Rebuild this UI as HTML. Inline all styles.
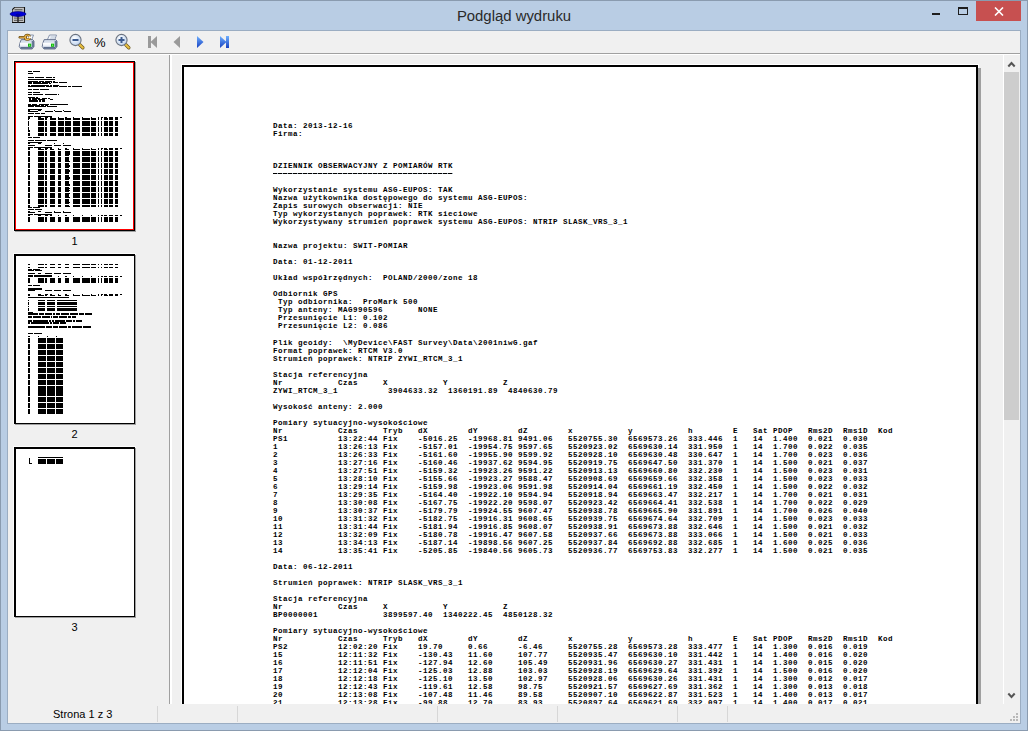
<!DOCTYPE html>
<html><head><meta charset="utf-8"><title>Podgląd wydruku</title>
<style>
*{margin:0;padding:0;box-sizing:border-box}
html,body{width:1028px;height:731px;overflow:hidden}
body{position:relative;background:#B9CDE4;font-family:"Liberation Sans",sans-serif}
.a{position:absolute}
pre.doc{position:absolute;font-family:"Liberation Mono",monospace;font-weight:bold;font-size:7.5px;line-height:8px;color:#000;white-space:pre;letter-spacing:0.5px}
.sep{position:absolute;top:706px;width:1px;height:16px;background:#D7D7D7}
</style></head><body>

<div class="a" style="left:0;top:0;width:1028px;height:731px;border:1px solid #8A9BAF"></div>
<div class="a" style="left:0;top:5.5px;width:1028px;text-align:center;font-size:14.9px;color:#2A2A2A;line-height:20px">Podgląd wydruku</div>
<svg class="a" style="left:0;top:0" width="30" height="30" viewBox="0 0 30 30">
<path d="M12.5 9.5 L14.5 7.5 L24.5 7.5 L24.5 22.5 L12.5 22.5 Z" fill="#C4C4C4" stroke="#505050" stroke-width="1" stroke-linejoin="miter"/>
<path d="M24.5 7 L24.5 23 M12 22.5 L25 22.5" stroke="#101010" stroke-width="1.1"/>
<path d="M12.3 9.7 L14.7 7.3" stroke="#101010" stroke-width="1.1"/>
<rect x="14.5" y="9" width="8" height="1.4" fill="#6A6A6A"/>
<rect x="14" y="17.5" width="9" height="1.2" fill="#6A6A6A"/>
<rect x="14" y="19.8" width="9" height="1.2" fill="#6A6A6A"/>
<rect x="17.2" y="14" width="1.6" height="8.5" fill="#303030"/>
<ellipse cx="18" cy="14" rx="8" ry="2.5" fill="#0000D8" stroke="#000070" stroke-width="0.6"/>
<ellipse cx="18" cy="15" rx="2.5" ry="1.6" fill="#0000A0"/>
</svg>
<div class="a" style="left:932px;top:13px;width:8px;height:2px;background:#1E1E1E"></div>
<div class="a" style="left:958px;top:7px;width:10px;height:8px;border:1px solid #1E1E1E;border-top-width:2px"></div>
<div class="a" style="left:976px;top:1px;width:45px;height:20px;background:#C75050"></div>
<svg class="a" style="left:994px;top:7px" width="10" height="9" viewBox="0 0 10 9"><path d="M1 0.5 L9 8.5 M9 0.5 L1 8.5" stroke="#fff" stroke-width="1.6"/></svg>
<div class="a" style="left:7px;top:30px;width:1014px;height:694px;background:#F0F0F0;border:1px solid #9BADC2"></div>
<div class="a" style="left:8px;top:53px;width:1012px;height:1px;background:#A0A0A0"></div>
<div class="a" style="left:8px;top:54px;width:1012px;height:1px;background:#FFFFFF"></div>
<svg class="a" style="left:0;top:30px" width="240" height="24" viewBox="0 30 240 24">
<defs>
<linearGradient id="pb" x1="0" y1="0" x2="0" y2="1"><stop offset="0" stop-color="#FFFFFF"/><stop offset="0.6" stop-color="#F2F5FA"/><stop offset="1" stop-color="#C4CEE0"/></linearGradient>
<linearGradient id="ps" x1="0" y1="0" x2="1" y2="0"><stop offset="0" stop-color="#8FA2BF"/><stop offset="1" stop-color="#3E4F6E"/></linearGradient>
<linearGradient id="bl" x1="0" y1="0" x2="0" y2="1"><stop offset="0" stop-color="#6FB0FF"/><stop offset="1" stop-color="#1740C0"/></linearGradient>
<radialGradient id="lens" cx="0.4" cy="0.35" r="0.7"><stop offset="0" stop-color="#FFFFFF"/><stop offset="1" stop-color="#B9D0EE"/></radialGradient>
</defs>
<!-- printer setup -->
<g transform="translate(0,0)">
<path d="M26.5 35 L33.5 35 L31.5 40.5 L24 40.5 Z" fill="#F6F8FC" stroke="#6E7E9A" stroke-width="0.8"/>

<path d="M20.2 42.2 L21.2 39.6 L32.6 39.6 L34 41 L34 46.5 L32.2 49 L21 49 L19.2 46.5 Z" fill="#D5DDEA" stroke="#4C5B7A" stroke-width="0.8"/>
<path d="M19.9 42.8 L31.5 42.8 L31.5 47 L20.2 47 Z" fill="url(#pb)"/>
<path d="M31.5 40.5 L33.6 41.2 L33.6 46.5 L31.8 48.6 Z" fill="url(#ps)"/>
<rect x="20.6" y="47" width="11.4" height="1.8" fill="#5E6E8C"/>
<rect x="28" y="43.6" width="3.2" height="3.2" fill="#10B810"/>
<rect x="29" y="44.6" width="1.2" height="1.2" fill="#8AF060"/>
</g>
<path d="M19.8 37.3 L25.5 37.3" stroke="#6A4A10" stroke-width="2.4" stroke-linecap="round"/>
<circle cx="27.4" cy="37.3" r="2.3" fill="none" stroke="#6A4A10" stroke-width="2.4"/>
<path d="M19.9 37.3 L25.5 37.3" stroke="#F0B848" stroke-width="1.1" stroke-linecap="round"/>
<circle cx="27.4" cy="37.3" r="2.3" fill="none" stroke="#F0B848" stroke-width="1.2"/>
<rect x="28.6" y="36.5" width="2.6" height="1.6" fill="#F6F8FC"/>
<!-- printer -->
<g transform="translate(23,0)">
<path d="M26.5 35 L33.5 35 L31.5 40.5 L24 40.5 Z" fill="#F6F8FC" stroke="#6E7E9A" stroke-width="0.8"/>
<path d="M27.5 37 L32 37 M26.8 39 L31.3 39" stroke="#A0AEC6" stroke-width="0.8"/>
<path d="M20.2 42.2 L21.2 39.6 L32.6 39.6 L34 41 L34 46.5 L32.2 49 L21 49 L19.2 46.5 Z" fill="#D5DDEA" stroke="#4C5B7A" stroke-width="0.8"/>
<path d="M19.9 42.8 L31.5 42.8 L31.5 47 L20.2 47 Z" fill="url(#pb)"/>
<path d="M31.5 40.5 L33.6 41.2 L33.6 46.5 L31.8 48.6 Z" fill="url(#ps)"/>
<rect x="20.6" y="47" width="11.4" height="1.8" fill="#5E6E8C"/>
<rect x="28" y="43.6" width="3.2" height="3.2" fill="#10B810"/>
<rect x="29" y="44.6" width="1.2" height="1.2" fill="#8AF060"/>
</g>
<!-- zoom out -->
<path d="M79.8 44.8 L82.8 47.8" stroke="#6A5518" stroke-width="3.4" stroke-linecap="round"/>
<path d="M79.8 44.8 L82.8 47.8" stroke="#E8C040" stroke-width="2" stroke-linecap="round"/>
<circle cx="75.5" cy="40" r="5.6" fill="url(#lens)" stroke="#6C7480" stroke-width="1.1"/>
<rect x="72.5" y="39" width="6" height="2" fill="#3A5A8E"/>
<!-- zoom in -->
<path d="M125.8 44.8 L128.8 47.8" stroke="#6A5518" stroke-width="3.4" stroke-linecap="round"/>
<path d="M125.8 44.8 L128.8 47.8" stroke="#E8C040" stroke-width="2" stroke-linecap="round"/>
<circle cx="121.5" cy="40" r="5.6" fill="url(#lens)" stroke="#6C7480" stroke-width="1.1"/>
<rect x="118.5" y="39" width="6" height="2" fill="#3A5A8E"/>
<rect x="120.5" y="37" width="2" height="6" fill="#3A5A8E"/>
<!-- nav -->
<rect x="148" y="36" width="3" height="12" fill="#9A9A9A"/>
<path d="M150.5 42 L157 36 L157 48 Z" fill="#9A9A9A"/>
<path d="M173.5 42 L180 36 L180 48 Z" fill="#9A9A9A"/>
<path d="M203.5 42 L197 36 L197 48 Z" fill="url(#bl)"/>
<path d="M226.5 42 L220 36 L220 48 Z" fill="url(#bl)"/>
<rect x="226" y="36" width="3" height="12" fill="url(#bl)"/>
</svg>
<div class="a" style="left:94px;top:35px;font-size:13px;line-height:15px;color:#000">%</div>

<div class="a" style="left:169px;top:55px;width:1px;height:649px;background:#A0A0A0"></div>
<div class="a" style="left:170px;top:55px;width:2px;height:649px;background:#FFFFFF"></div>
<svg class="a" style="left:0;top:0" width="170" height="640" viewBox="0 0 170 640"><rect x="13" y="60" width="123" height="171" fill="#FFFFFF" opacity="0.8"/><rect x="15" y="62" width="121" height="170" fill="#A0A0A0"/><rect x="14" y="61" width="121" height="170" fill="#000"/><rect x="15" y="62" width="119" height="168" fill="#FF0000"/><rect x="16" y="63" width="117" height="166" fill="#FFFFFF"/><rect x="13" y="253" width="123" height="171" fill="#FFFFFF" opacity="0.8"/><rect x="15" y="255" width="121" height="170" fill="#A0A0A0"/><rect x="14" y="254" width="121" height="170" fill="#000"/><rect x="16" y="256" width="118" height="167" fill="#FFFFFF"/><rect x="13" y="446" width="123" height="171" fill="#FFFFFF" opacity="0.8"/><rect x="15" y="448" width="121" height="170" fill="#A0A0A0"/><rect x="14" y="447" width="121" height="170" fill="#000"/><rect x="16" y="449" width="118" height="167" fill="#FFFFFF"/><g fill="#000" shape-rendering="crispEdges"><rect x="28.00" y="71.00" width="3.80" height="1.00"/><rect x="32.56" y="71.00" width="7.60" height="1.00"/><rect x="28.00" y="73.00" width="4.56" height="1.00"/><rect x="28.00" y="77.00" width="6.08" height="1.00"/><rect x="34.84" y="77.00" width="9.12" height="1.00"/><rect x="44.72" y="77.00" width="0.76" height="1.00"/><rect x="46.24" y="77.00" width="6.08" height="1.00"/><rect x="53.08" y="77.00" width="2.28" height="1.00"/><rect x="28.00" y="79.00" width="27.36" height="1.00"/><rect x="28.00" y="81.00" width="9.88" height="1.00"/><rect x="38.64" y="81.00" width="5.32" height="1.00"/><rect x="44.72" y="81.00" width="7.60" height="1.00"/><rect x="53.08" y="81.00" width="2.28" height="1.00"/><rect x="28.00" y="82.00" width="3.80" height="1.00"/><rect x="32.56" y="82.00" width="8.36" height="1.00"/><rect x="41.68" y="82.00" width="8.36" height="1.00"/><rect x="50.80" y="82.00" width="1.52" height="1.00"/><rect x="53.08" y="82.00" width="5.32" height="1.00"/><rect x="59.16" y="82.00" width="7.60" height="1.00"/><rect x="28.00" y="83.00" width="3.80" height="1.00"/><rect x="32.56" y="83.00" width="6.08" height="1.00"/><rect x="39.40" y="83.00" width="8.36" height="1.00"/><rect x="48.52" y="83.00" width="2.28" height="1.00"/><rect x="28.00" y="85.00" width="2.28" height="1.00"/><rect x="31.04" y="85.00" width="10.64" height="1.00"/><rect x="42.44" y="85.00" width="6.84" height="1.00"/><rect x="50.04" y="85.00" width="2.28" height="1.00"/><rect x="53.08" y="85.00" width="6.08" height="1.00"/><rect x="28.00" y="86.00" width="10.64" height="1.00"/><rect x="39.40" y="86.00" width="6.08" height="1.00"/><rect x="46.24" y="86.00" width="6.08" height="1.00"/><rect x="53.08" y="86.00" width="5.32" height="1.00"/><rect x="59.16" y="86.00" width="7.60" height="1.00"/><rect x="67.52" y="86.00" width="3.80" height="1.00"/><rect x="72.08" y="86.00" width="9.88" height="1.00"/><rect x="28.00" y="89.00" width="3.80" height="1.00"/><rect x="32.56" y="89.00" width="6.84" height="1.00"/><rect x="40.16" y="89.00" width="8.36" height="1.00"/><rect x="28.00" y="92.00" width="3.80" height="1.00"/><rect x="32.56" y="92.00" width="7.60" height="1.00"/><rect x="28.00" y="94.00" width="3.80" height="1.00"/><rect x="32.56" y="94.00" width="10.64" height="1.00"/><rect x="44.72" y="94.00" width="12.16" height="1.00"/><rect x="57.64" y="94.00" width="1.52" height="1.00"/><rect x="28.00" y="97.00" width="6.84" height="1.00"/><rect x="35.60" y="97.00" width="2.28" height="1.00"/><rect x="28.76" y="98.00" width="2.28" height="1.00"/><rect x="31.80" y="98.00" width="8.36" height="1.00"/><rect x="41.68" y="98.00" width="5.32" height="1.00"/><rect x="47.76" y="98.00" width="2.28" height="1.00"/><rect x="28.76" y="99.00" width="2.28" height="1.00"/><rect x="31.80" y="99.00" width="5.32" height="1.00"/><rect x="37.88" y="99.00" width="6.84" height="1.00"/><rect x="50.04" y="99.00" width="3.04" height="1.00"/><rect x="28.76" y="100.00" width="9.12" height="1.00"/><rect x="38.64" y="100.00" width="2.28" height="1.00"/><rect x="41.68" y="100.00" width="3.80" height="1.00"/><rect x="28.76" y="101.00" width="9.12" height="1.00"/><rect x="38.64" y="101.00" width="2.28" height="1.00"/><rect x="41.68" y="101.00" width="3.80" height="1.00"/><rect x="28.00" y="104.00" width="3.04" height="1.00"/><rect x="31.80" y="104.00" width="5.32" height="1.00"/><rect x="38.64" y="104.00" width="10.64" height="1.00"/><rect x="50.04" y="104.00" width="18.24" height="1.00"/><rect x="28.00" y="105.00" width="4.56" height="1.00"/><rect x="33.32" y="105.00" width="6.84" height="1.00"/><rect x="40.92" y="105.00" width="3.04" height="1.00"/><rect x="44.72" y="105.00" width="3.04" height="1.00"/><rect x="28.00" y="106.00" width="6.08" height="1.00"/><rect x="34.84" y="106.00" width="6.84" height="1.00"/><rect x="42.44" y="106.00" width="3.80" height="1.00"/><rect x="47.00" y="106.00" width="9.88" height="1.00"/><rect x="28.00" y="109.00" width="4.56" height="1.00"/><rect x="33.32" y="109.00" width="9.12" height="1.00"/><rect x="28.00" y="110.00" width="1.52" height="1.00"/><rect x="37.88" y="110.00" width="3.04" height="1.00"/><rect x="44.72" y="110.00" width="0.76" height="1.00"/><rect x="53.84" y="110.00" width="0.76" height="1.00"/><rect x="62.96" y="110.00" width="0.76" height="1.00"/><rect x="28.00" y="111.00" width="9.88" height="1.00"/><rect x="45.48" y="111.00" width="7.60" height="1.00"/><rect x="54.60" y="111.00" width="7.60" height="1.00"/><rect x="63.72" y="111.00" width="7.60" height="1.00"/><rect x="28.00" y="113.00" width="6.08" height="1.00"/><rect x="34.84" y="113.00" width="5.32" height="1.00"/><rect x="40.92" y="113.00" width="3.80" height="1.00"/><rect x="28.00" y="116.00" width="5.32" height="1.00"/><rect x="34.08" y="116.00" width="17.48" height="1.00"/><rect x="28.00" y="117.00" width="1.52" height="1.00"/><rect x="37.88" y="117.00" width="3.04" height="1.00"/><rect x="44.72" y="117.00" width="3.04" height="1.00"/><rect x="50.04" y="117.00" width="1.52" height="1.00"/><rect x="57.64" y="117.00" width="1.52" height="1.00"/><rect x="65.24" y="117.00" width="1.52" height="1.00"/><rect x="72.84" y="117.00" width="0.76" height="1.00"/><rect x="81.96" y="117.00" width="0.76" height="1.00"/><rect x="91.08" y="117.00" width="0.76" height="1.00"/><rect x="97.92" y="117.00" width="0.76" height="1.00"/><rect x="100.96" y="117.00" width="2.28" height="1.00"/><rect x="104.00" y="117.00" width="3.04" height="1.00"/><rect x="109.32" y="117.00" width="3.80" height="1.00"/><rect x="114.64" y="117.00" width="3.80" height="1.00"/><rect x="119.96" y="117.00" width="2.28" height="1.00"/><rect x="28.00" y="118.00" width="2.28" height="1.00"/><rect x="37.88" y="118.00" width="6.08" height="1.00"/><rect x="44.72" y="118.00" width="2.28" height="1.00"/><rect x="50.04" y="118.00" width="6.08" height="1.00"/><rect x="57.64" y="118.00" width="6.84" height="1.00"/><rect x="65.24" y="118.00" width="5.32" height="1.00"/><rect x="72.84" y="118.00" width="7.60" height="1.00"/><rect x="81.96" y="118.00" width="7.60" height="1.00"/><rect x="91.08" y="118.00" width="5.32" height="1.00"/><rect x="97.92" y="118.00" width="0.76" height="1.00"/><rect x="100.96" y="118.00" width="1.52" height="1.00"/><rect x="104.00" y="118.00" width="3.80" height="1.00"/><rect x="109.32" y="118.00" width="3.80" height="1.00"/><rect x="114.64" y="118.00" width="3.80" height="1.00"/><rect x="28.00" y="119.00" width="0.76" height="1.00"/><rect x="37.88" y="119.00" width="6.08" height="1.00"/><rect x="44.72" y="119.00" width="2.28" height="1.00"/><rect x="50.04" y="119.00" width="6.08" height="1.00"/><rect x="57.64" y="119.00" width="6.84" height="1.00"/><rect x="65.24" y="119.00" width="5.32" height="1.00"/><rect x="72.84" y="119.00" width="7.60" height="1.00"/><rect x="81.96" y="119.00" width="7.60" height="1.00"/><rect x="91.08" y="119.00" width="5.32" height="1.00"/><rect x="97.92" y="119.00" width="0.76" height="1.00"/><rect x="100.96" y="119.00" width="1.52" height="1.00"/><rect x="104.00" y="119.00" width="3.80" height="1.00"/><rect x="109.32" y="119.00" width="3.80" height="1.00"/><rect x="114.64" y="119.00" width="3.80" height="1.00"/><rect x="28.00" y="121.00" width="0.76" height="1.00"/><rect x="37.88" y="121.00" width="6.08" height="1.00"/><rect x="44.72" y="121.00" width="2.28" height="1.00"/><rect x="50.04" y="121.00" width="6.08" height="1.00"/><rect x="57.64" y="121.00" width="6.84" height="1.00"/><rect x="65.24" y="121.00" width="5.32" height="1.00"/><rect x="72.84" y="121.00" width="7.60" height="1.00"/><rect x="81.96" y="121.00" width="7.60" height="1.00"/><rect x="91.08" y="121.00" width="5.32" height="1.00"/><rect x="97.92" y="121.00" width="0.76" height="1.00"/><rect x="100.96" y="121.00" width="1.52" height="1.00"/><rect x="104.00" y="121.00" width="3.80" height="1.00"/><rect x="109.32" y="121.00" width="3.80" height="1.00"/><rect x="114.64" y="121.00" width="3.80" height="1.00"/><rect x="28.00" y="122.00" width="0.76" height="1.00"/><rect x="37.88" y="122.00" width="6.08" height="1.00"/><rect x="44.72" y="122.00" width="2.28" height="1.00"/><rect x="50.04" y="122.00" width="6.08" height="1.00"/><rect x="57.64" y="122.00" width="6.84" height="1.00"/><rect x="65.24" y="122.00" width="5.32" height="1.00"/><rect x="72.84" y="122.00" width="7.60" height="1.00"/><rect x="81.96" y="122.00" width="7.60" height="1.00"/><rect x="91.08" y="122.00" width="5.32" height="1.00"/><rect x="97.92" y="122.00" width="0.76" height="1.00"/><rect x="100.96" y="122.00" width="1.52" height="1.00"/><rect x="104.00" y="122.00" width="3.80" height="1.00"/><rect x="109.32" y="122.00" width="3.80" height="1.00"/><rect x="114.64" y="122.00" width="3.80" height="1.00"/><rect x="28.00" y="123.00" width="0.76" height="1.00"/><rect x="37.88" y="123.00" width="6.08" height="1.00"/><rect x="44.72" y="123.00" width="2.28" height="1.00"/><rect x="50.04" y="123.00" width="6.08" height="1.00"/><rect x="57.64" y="123.00" width="6.84" height="1.00"/><rect x="65.24" y="123.00" width="5.32" height="1.00"/><rect x="72.84" y="123.00" width="7.60" height="1.00"/><rect x="81.96" y="123.00" width="7.60" height="1.00"/><rect x="91.08" y="123.00" width="5.32" height="1.00"/><rect x="97.92" y="123.00" width="0.76" height="1.00"/><rect x="100.96" y="123.00" width="1.52" height="1.00"/><rect x="104.00" y="123.00" width="3.80" height="1.00"/><rect x="109.32" y="123.00" width="3.80" height="1.00"/><rect x="114.64" y="123.00" width="3.80" height="1.00"/><rect x="28.00" y="124.00" width="0.76" height="1.00"/><rect x="37.88" y="124.00" width="6.08" height="1.00"/><rect x="44.72" y="124.00" width="2.28" height="1.00"/><rect x="50.04" y="124.00" width="6.08" height="1.00"/><rect x="57.64" y="124.00" width="6.84" height="1.00"/><rect x="65.24" y="124.00" width="5.32" height="1.00"/><rect x="72.84" y="124.00" width="7.60" height="1.00"/><rect x="81.96" y="124.00" width="7.60" height="1.00"/><rect x="91.08" y="124.00" width="5.32" height="1.00"/><rect x="97.92" y="124.00" width="0.76" height="1.00"/><rect x="100.96" y="124.00" width="1.52" height="1.00"/><rect x="104.00" y="124.00" width="3.80" height="1.00"/><rect x="109.32" y="124.00" width="3.80" height="1.00"/><rect x="114.64" y="124.00" width="3.80" height="1.00"/><rect x="28.00" y="125.00" width="0.76" height="1.00"/><rect x="37.88" y="125.00" width="6.08" height="1.00"/><rect x="44.72" y="125.00" width="2.28" height="1.00"/><rect x="50.04" y="125.00" width="6.08" height="1.00"/><rect x="57.64" y="125.00" width="6.84" height="1.00"/><rect x="65.24" y="125.00" width="5.32" height="1.00"/><rect x="72.84" y="125.00" width="7.60" height="1.00"/><rect x="81.96" y="125.00" width="7.60" height="1.00"/><rect x="91.08" y="125.00" width="5.32" height="1.00"/><rect x="97.92" y="125.00" width="0.76" height="1.00"/><rect x="100.96" y="125.00" width="1.52" height="1.00"/><rect x="104.00" y="125.00" width="3.80" height="1.00"/><rect x="109.32" y="125.00" width="3.80" height="1.00"/><rect x="114.64" y="125.00" width="3.80" height="1.00"/><rect x="28.00" y="127.00" width="0.76" height="1.00"/><rect x="37.88" y="127.00" width="6.08" height="1.00"/><rect x="44.72" y="127.00" width="2.28" height="1.00"/><rect x="50.04" y="127.00" width="6.08" height="1.00"/><rect x="57.64" y="127.00" width="6.84" height="1.00"/><rect x="65.24" y="127.00" width="5.32" height="1.00"/><rect x="72.84" y="127.00" width="7.60" height="1.00"/><rect x="81.96" y="127.00" width="7.60" height="1.00"/><rect x="91.08" y="127.00" width="5.32" height="1.00"/><rect x="97.92" y="127.00" width="0.76" height="1.00"/><rect x="100.96" y="127.00" width="1.52" height="1.00"/><rect x="104.00" y="127.00" width="3.80" height="1.00"/><rect x="109.32" y="127.00" width="3.80" height="1.00"/><rect x="114.64" y="127.00" width="3.80" height="1.00"/><rect x="28.00" y="128.00" width="0.76" height="1.00"/><rect x="37.88" y="128.00" width="6.08" height="1.00"/><rect x="44.72" y="128.00" width="2.28" height="1.00"/><rect x="50.04" y="128.00" width="6.08" height="1.00"/><rect x="57.64" y="128.00" width="6.84" height="1.00"/><rect x="65.24" y="128.00" width="5.32" height="1.00"/><rect x="72.84" y="128.00" width="7.60" height="1.00"/><rect x="81.96" y="128.00" width="7.60" height="1.00"/><rect x="91.08" y="128.00" width="5.32" height="1.00"/><rect x="97.92" y="128.00" width="0.76" height="1.00"/><rect x="100.96" y="128.00" width="1.52" height="1.00"/><rect x="104.00" y="128.00" width="3.80" height="1.00"/><rect x="109.32" y="128.00" width="3.80" height="1.00"/><rect x="114.64" y="128.00" width="3.80" height="1.00"/><rect x="28.00" y="129.00" width="0.76" height="1.00"/><rect x="37.88" y="129.00" width="6.08" height="1.00"/><rect x="44.72" y="129.00" width="2.28" height="1.00"/><rect x="50.04" y="129.00" width="6.08" height="1.00"/><rect x="57.64" y="129.00" width="6.84" height="1.00"/><rect x="65.24" y="129.00" width="5.32" height="1.00"/><rect x="72.84" y="129.00" width="7.60" height="1.00"/><rect x="81.96" y="129.00" width="7.60" height="1.00"/><rect x="91.08" y="129.00" width="5.32" height="1.00"/><rect x="97.92" y="129.00" width="0.76" height="1.00"/><rect x="100.96" y="129.00" width="1.52" height="1.00"/><rect x="104.00" y="129.00" width="3.80" height="1.00"/><rect x="109.32" y="129.00" width="3.80" height="1.00"/><rect x="114.64" y="129.00" width="3.80" height="1.00"/><rect x="28.00" y="130.00" width="1.52" height="1.00"/><rect x="37.88" y="130.00" width="6.08" height="1.00"/><rect x="44.72" y="130.00" width="2.28" height="1.00"/><rect x="50.04" y="130.00" width="6.08" height="1.00"/><rect x="57.64" y="130.00" width="6.84" height="1.00"/><rect x="65.24" y="130.00" width="5.32" height="1.00"/><rect x="72.84" y="130.00" width="7.60" height="1.00"/><rect x="81.96" y="130.00" width="7.60" height="1.00"/><rect x="91.08" y="130.00" width="5.32" height="1.00"/><rect x="97.92" y="130.00" width="0.76" height="1.00"/><rect x="100.96" y="130.00" width="1.52" height="1.00"/><rect x="104.00" y="130.00" width="3.80" height="1.00"/><rect x="109.32" y="130.00" width="3.80" height="1.00"/><rect x="114.64" y="130.00" width="3.80" height="1.00"/><rect x="28.00" y="131.00" width="1.52" height="1.00"/><rect x="37.88" y="131.00" width="6.08" height="1.00"/><rect x="44.72" y="131.00" width="2.28" height="1.00"/><rect x="50.04" y="131.00" width="6.08" height="1.00"/><rect x="57.64" y="131.00" width="6.84" height="1.00"/><rect x="65.24" y="131.00" width="5.32" height="1.00"/><rect x="72.84" y="131.00" width="7.60" height="1.00"/><rect x="81.96" y="131.00" width="7.60" height="1.00"/><rect x="91.08" y="131.00" width="5.32" height="1.00"/><rect x="97.92" y="131.00" width="0.76" height="1.00"/><rect x="100.96" y="131.00" width="1.52" height="1.00"/><rect x="104.00" y="131.00" width="3.80" height="1.00"/><rect x="109.32" y="131.00" width="3.80" height="1.00"/><rect x="114.64" y="131.00" width="3.80" height="1.00"/><rect x="28.00" y="133.00" width="1.52" height="1.00"/><rect x="37.88" y="133.00" width="6.08" height="1.00"/><rect x="44.72" y="133.00" width="2.28" height="1.00"/><rect x="50.04" y="133.00" width="6.08" height="1.00"/><rect x="57.64" y="133.00" width="6.84" height="1.00"/><rect x="65.24" y="133.00" width="5.32" height="1.00"/><rect x="72.84" y="133.00" width="7.60" height="1.00"/><rect x="81.96" y="133.00" width="7.60" height="1.00"/><rect x="91.08" y="133.00" width="5.32" height="1.00"/><rect x="97.92" y="133.00" width="0.76" height="1.00"/><rect x="100.96" y="133.00" width="1.52" height="1.00"/><rect x="104.00" y="133.00" width="3.80" height="1.00"/><rect x="109.32" y="133.00" width="3.80" height="1.00"/><rect x="114.64" y="133.00" width="3.80" height="1.00"/><rect x="28.00" y="134.00" width="1.52" height="1.00"/><rect x="37.88" y="134.00" width="6.08" height="1.00"/><rect x="44.72" y="134.00" width="2.28" height="1.00"/><rect x="50.04" y="134.00" width="6.08" height="1.00"/><rect x="57.64" y="134.00" width="6.84" height="1.00"/><rect x="65.24" y="134.00" width="5.32" height="1.00"/><rect x="72.84" y="134.00" width="7.60" height="1.00"/><rect x="81.96" y="134.00" width="7.60" height="1.00"/><rect x="91.08" y="134.00" width="5.32" height="1.00"/><rect x="97.92" y="134.00" width="0.76" height="1.00"/><rect x="100.96" y="134.00" width="1.52" height="1.00"/><rect x="104.00" y="134.00" width="3.80" height="1.00"/><rect x="109.32" y="134.00" width="3.80" height="1.00"/><rect x="114.64" y="134.00" width="3.80" height="1.00"/><rect x="28.00" y="135.00" width="1.52" height="1.00"/><rect x="37.88" y="135.00" width="6.08" height="1.00"/><rect x="44.72" y="135.00" width="2.28" height="1.00"/><rect x="50.04" y="135.00" width="6.08" height="1.00"/><rect x="57.64" y="135.00" width="6.84" height="1.00"/><rect x="65.24" y="135.00" width="5.32" height="1.00"/><rect x="72.84" y="135.00" width="7.60" height="1.00"/><rect x="81.96" y="135.00" width="7.60" height="1.00"/><rect x="91.08" y="135.00" width="5.32" height="1.00"/><rect x="97.92" y="135.00" width="0.76" height="1.00"/><rect x="100.96" y="135.00" width="1.52" height="1.00"/><rect x="104.00" y="135.00" width="3.80" height="1.00"/><rect x="109.32" y="135.00" width="3.80" height="1.00"/><rect x="114.64" y="135.00" width="3.80" height="1.00"/><rect x="28.00" y="137.00" width="3.80" height="1.00"/><rect x="32.56" y="137.00" width="7.60" height="1.00"/><rect x="28.00" y="140.00" width="6.08" height="1.00"/><rect x="34.84" y="140.00" width="6.84" height="1.00"/><rect x="42.44" y="140.00" width="3.80" height="1.00"/><rect x="47.00" y="140.00" width="9.88" height="1.00"/><rect x="28.00" y="142.00" width="4.56" height="1.00"/><rect x="33.32" y="142.00" width="9.12" height="1.00"/><rect x="28.00" y="143.00" width="1.52" height="1.00"/><rect x="37.88" y="143.00" width="3.04" height="1.00"/><rect x="44.72" y="143.00" width="0.76" height="1.00"/><rect x="53.84" y="143.00" width="0.76" height="1.00"/><rect x="62.96" y="143.00" width="0.76" height="1.00"/><rect x="28.00" y="145.00" width="6.84" height="1.00"/><rect x="44.72" y="145.00" width="7.60" height="1.00"/><rect x="53.84" y="145.00" width="7.60" height="1.00"/><rect x="62.96" y="145.00" width="7.60" height="1.00"/><rect x="28.00" y="147.00" width="5.32" height="1.00"/><rect x="34.08" y="147.00" width="17.48" height="1.00"/><rect x="28.00" y="148.00" width="1.52" height="1.00"/><rect x="37.88" y="148.00" width="3.04" height="1.00"/><rect x="44.72" y="148.00" width="3.04" height="1.00"/><rect x="50.04" y="148.00" width="1.52" height="1.00"/><rect x="57.64" y="148.00" width="1.52" height="1.00"/><rect x="65.24" y="148.00" width="1.52" height="1.00"/><rect x="72.84" y="148.00" width="0.76" height="1.00"/><rect x="81.96" y="148.00" width="0.76" height="1.00"/><rect x="91.08" y="148.00" width="0.76" height="1.00"/><rect x="97.92" y="148.00" width="0.76" height="1.00"/><rect x="100.96" y="148.00" width="2.28" height="1.00"/><rect x="104.00" y="148.00" width="3.04" height="1.00"/><rect x="109.32" y="148.00" width="3.80" height="1.00"/><rect x="114.64" y="148.00" width="3.80" height="1.00"/><rect x="119.96" y="148.00" width="2.28" height="1.00"/><rect x="28.00" y="149.00" width="2.28" height="1.00"/><rect x="37.88" y="149.00" width="6.08" height="1.00"/><rect x="44.72" y="149.00" width="2.28" height="1.00"/><rect x="50.04" y="149.00" width="3.80" height="1.00"/><rect x="57.64" y="149.00" width="3.04" height="1.00"/><rect x="65.24" y="149.00" width="3.80" height="1.00"/><rect x="72.84" y="149.00" width="7.60" height="1.00"/><rect x="81.96" y="149.00" width="7.60" height="1.00"/><rect x="91.08" y="149.00" width="5.32" height="1.00"/><rect x="97.92" y="149.00" width="0.76" height="1.00"/><rect x="100.96" y="149.00" width="1.52" height="1.00"/><rect x="104.00" y="149.00" width="3.80" height="1.00"/><rect x="109.32" y="149.00" width="3.80" height="1.00"/><rect x="114.64" y="149.00" width="3.80" height="1.00"/><rect x="28.00" y="151.00" width="1.52" height="1.00"/><rect x="37.88" y="151.00" width="6.08" height="1.00"/><rect x="44.72" y="151.00" width="2.28" height="1.00"/><rect x="50.04" y="151.00" width="5.32" height="1.00"/><rect x="57.64" y="151.00" width="3.80" height="1.00"/><rect x="65.24" y="151.00" width="4.56" height="1.00"/><rect x="72.84" y="151.00" width="7.60" height="1.00"/><rect x="81.96" y="151.00" width="7.60" height="1.00"/><rect x="91.08" y="151.00" width="5.32" height="1.00"/><rect x="97.92" y="151.00" width="0.76" height="1.00"/><rect x="100.96" y="151.00" width="1.52" height="1.00"/><rect x="104.00" y="151.00" width="3.80" height="1.00"/><rect x="109.32" y="151.00" width="3.80" height="1.00"/><rect x="114.64" y="151.00" width="3.80" height="1.00"/><rect x="28.00" y="152.00" width="1.52" height="1.00"/><rect x="37.88" y="152.00" width="6.08" height="1.00"/><rect x="44.72" y="152.00" width="2.28" height="1.00"/><rect x="50.04" y="152.00" width="5.32" height="1.00"/><rect x="57.64" y="152.00" width="3.80" height="1.00"/><rect x="65.24" y="152.00" width="4.56" height="1.00"/><rect x="72.84" y="152.00" width="7.60" height="1.00"/><rect x="81.96" y="152.00" width="7.60" height="1.00"/><rect x="91.08" y="152.00" width="5.32" height="1.00"/><rect x="97.92" y="152.00" width="0.76" height="1.00"/><rect x="100.96" y="152.00" width="1.52" height="1.00"/><rect x="104.00" y="152.00" width="3.80" height="1.00"/><rect x="109.32" y="152.00" width="3.80" height="1.00"/><rect x="114.64" y="152.00" width="3.80" height="1.00"/><rect x="28.00" y="153.00" width="1.52" height="1.00"/><rect x="37.88" y="153.00" width="6.08" height="1.00"/><rect x="44.72" y="153.00" width="2.28" height="1.00"/><rect x="50.04" y="153.00" width="5.32" height="1.00"/><rect x="57.64" y="153.00" width="3.80" height="1.00"/><rect x="65.24" y="153.00" width="4.56" height="1.00"/><rect x="72.84" y="153.00" width="7.60" height="1.00"/><rect x="81.96" y="153.00" width="7.60" height="1.00"/><rect x="91.08" y="153.00" width="5.32" height="1.00"/><rect x="97.92" y="153.00" width="0.76" height="1.00"/><rect x="100.96" y="153.00" width="1.52" height="1.00"/><rect x="104.00" y="153.00" width="3.80" height="1.00"/><rect x="109.32" y="153.00" width="3.80" height="1.00"/><rect x="114.64" y="153.00" width="3.80" height="1.00"/><rect x="28.00" y="154.00" width="1.52" height="1.00"/><rect x="37.88" y="154.00" width="6.08" height="1.00"/><rect x="44.72" y="154.00" width="2.28" height="1.00"/><rect x="50.04" y="154.00" width="5.32" height="1.00"/><rect x="57.64" y="154.00" width="3.80" height="1.00"/><rect x="65.24" y="154.00" width="4.56" height="1.00"/><rect x="72.84" y="154.00" width="7.60" height="1.00"/><rect x="81.96" y="154.00" width="7.60" height="1.00"/><rect x="91.08" y="154.00" width="5.32" height="1.00"/><rect x="97.92" y="154.00" width="0.76" height="1.00"/><rect x="100.96" y="154.00" width="1.52" height="1.00"/><rect x="104.00" y="154.00" width="3.80" height="1.00"/><rect x="109.32" y="154.00" width="3.80" height="1.00"/><rect x="114.64" y="154.00" width="3.80" height="1.00"/><rect x="28.00" y="155.00" width="1.52" height="1.00"/><rect x="37.88" y="155.00" width="6.08" height="1.00"/><rect x="44.72" y="155.00" width="2.28" height="1.00"/><rect x="50.04" y="155.00" width="5.32" height="1.00"/><rect x="57.64" y="155.00" width="3.80" height="1.00"/><rect x="65.24" y="155.00" width="3.80" height="1.00"/><rect x="72.84" y="155.00" width="7.60" height="1.00"/><rect x="81.96" y="155.00" width="7.60" height="1.00"/><rect x="91.08" y="155.00" width="5.32" height="1.00"/><rect x="97.92" y="155.00" width="0.76" height="1.00"/><rect x="100.96" y="155.00" width="1.52" height="1.00"/><rect x="104.00" y="155.00" width="3.80" height="1.00"/><rect x="109.32" y="155.00" width="3.80" height="1.00"/><rect x="114.64" y="155.00" width="3.80" height="1.00"/><rect x="28.00" y="157.00" width="1.52" height="1.00"/><rect x="37.88" y="157.00" width="6.08" height="1.00"/><rect x="44.72" y="157.00" width="2.28" height="1.00"/><rect x="50.04" y="157.00" width="5.32" height="1.00"/><rect x="57.64" y="157.00" width="3.80" height="1.00"/><rect x="65.24" y="157.00" width="3.80" height="1.00"/><rect x="72.84" y="157.00" width="7.60" height="1.00"/><rect x="81.96" y="157.00" width="7.60" height="1.00"/><rect x="91.08" y="157.00" width="5.32" height="1.00"/><rect x="97.92" y="157.00" width="0.76" height="1.00"/><rect x="100.96" y="157.00" width="1.52" height="1.00"/><rect x="104.00" y="157.00" width="3.80" height="1.00"/><rect x="109.32" y="157.00" width="3.80" height="1.00"/><rect x="114.64" y="157.00" width="3.80" height="1.00"/><rect x="28.00" y="158.00" width="1.52" height="1.00"/><rect x="37.88" y="158.00" width="6.08" height="1.00"/><rect x="44.72" y="158.00" width="2.28" height="1.00"/><rect x="50.04" y="158.00" width="4.56" height="1.00"/><rect x="57.64" y="158.00" width="3.80" height="1.00"/><rect x="65.24" y="158.00" width="3.80" height="1.00"/><rect x="72.84" y="158.00" width="7.60" height="1.00"/><rect x="81.96" y="158.00" width="7.60" height="1.00"/><rect x="91.08" y="158.00" width="5.32" height="1.00"/><rect x="97.92" y="158.00" width="0.76" height="1.00"/><rect x="100.96" y="158.00" width="1.52" height="1.00"/><rect x="104.00" y="158.00" width="3.80" height="1.00"/><rect x="109.32" y="158.00" width="3.80" height="1.00"/><rect x="114.64" y="158.00" width="3.80" height="1.00"/><rect x="28.00" y="159.00" width="1.52" height="1.00"/><rect x="37.88" y="159.00" width="6.08" height="1.00"/><rect x="44.72" y="159.00" width="2.28" height="1.00"/><rect x="50.04" y="159.00" width="5.32" height="1.00"/><rect x="57.64" y="159.00" width="3.80" height="1.00"/><rect x="65.24" y="159.00" width="3.80" height="1.00"/><rect x="72.84" y="159.00" width="7.60" height="1.00"/><rect x="81.96" y="159.00" width="7.60" height="1.00"/><rect x="91.08" y="159.00" width="5.32" height="1.00"/><rect x="97.92" y="159.00" width="0.76" height="1.00"/><rect x="100.96" y="159.00" width="1.52" height="1.00"/><rect x="104.00" y="159.00" width="3.80" height="1.00"/><rect x="109.32" y="159.00" width="3.80" height="1.00"/><rect x="114.64" y="159.00" width="3.80" height="1.00"/><rect x="28.00" y="160.00" width="1.52" height="1.00"/><rect x="37.88" y="160.00" width="6.08" height="1.00"/><rect x="44.72" y="160.00" width="2.28" height="1.00"/><rect x="50.04" y="160.00" width="5.32" height="1.00"/><rect x="57.64" y="160.00" width="3.80" height="1.00"/><rect x="65.24" y="160.00" width="3.80" height="1.00"/><rect x="72.84" y="160.00" width="7.60" height="1.00"/><rect x="81.96" y="160.00" width="7.60" height="1.00"/><rect x="91.08" y="160.00" width="5.32" height="1.00"/><rect x="97.92" y="160.00" width="0.76" height="1.00"/><rect x="100.96" y="160.00" width="1.52" height="1.00"/><rect x="104.00" y="160.00" width="3.80" height="1.00"/><rect x="109.32" y="160.00" width="3.80" height="1.00"/><rect x="114.64" y="160.00" width="3.80" height="1.00"/><rect x="28.00" y="161.00" width="1.52" height="1.00"/><rect x="37.88" y="161.00" width="6.08" height="1.00"/><rect x="44.72" y="161.00" width="2.28" height="1.00"/><rect x="50.04" y="161.00" width="5.32" height="1.00"/><rect x="57.64" y="161.00" width="3.80" height="1.00"/><rect x="65.24" y="161.00" width="4.56" height="1.00"/><rect x="72.84" y="161.00" width="7.60" height="1.00"/><rect x="81.96" y="161.00" width="7.60" height="1.00"/><rect x="91.08" y="161.00" width="5.32" height="1.00"/><rect x="97.92" y="161.00" width="0.76" height="1.00"/><rect x="100.96" y="161.00" width="1.52" height="1.00"/><rect x="104.00" y="161.00" width="3.80" height="1.00"/><rect x="109.32" y="161.00" width="3.80" height="1.00"/><rect x="114.64" y="161.00" width="3.80" height="1.00"/><rect x="28.00" y="163.00" width="1.52" height="1.00"/><rect x="37.88" y="163.00" width="6.08" height="1.00"/><rect x="44.72" y="163.00" width="2.28" height="1.00"/><rect x="50.04" y="163.00" width="5.32" height="1.00"/><rect x="57.64" y="163.00" width="3.80" height="1.00"/><rect x="65.24" y="163.00" width="3.80" height="1.00"/><rect x="72.84" y="163.00" width="7.60" height="1.00"/><rect x="81.96" y="163.00" width="7.60" height="1.00"/><rect x="91.08" y="163.00" width="5.32" height="1.00"/><rect x="97.92" y="163.00" width="0.76" height="1.00"/><rect x="100.96" y="163.00" width="1.52" height="1.00"/><rect x="104.00" y="163.00" width="3.80" height="1.00"/><rect x="109.32" y="163.00" width="3.80" height="1.00"/><rect x="114.64" y="163.00" width="3.80" height="1.00"/><rect x="28.00" y="164.00" width="1.52" height="1.00"/><rect x="37.88" y="164.00" width="6.08" height="1.00"/><rect x="44.72" y="164.00" width="2.28" height="1.00"/><rect x="50.04" y="164.00" width="5.32" height="1.00"/><rect x="57.64" y="164.00" width="3.80" height="1.00"/><rect x="65.24" y="164.00" width="3.80" height="1.00"/><rect x="72.84" y="164.00" width="7.60" height="1.00"/><rect x="81.96" y="164.00" width="7.60" height="1.00"/><rect x="91.08" y="164.00" width="5.32" height="1.00"/><rect x="97.92" y="164.00" width="0.76" height="1.00"/><rect x="100.96" y="164.00" width="1.52" height="1.00"/><rect x="104.00" y="164.00" width="3.80" height="1.00"/><rect x="109.32" y="164.00" width="3.80" height="1.00"/><rect x="114.64" y="164.00" width="3.80" height="1.00"/><rect x="28.00" y="165.00" width="1.52" height="1.00"/><rect x="37.88" y="165.00" width="6.08" height="1.00"/><rect x="44.72" y="165.00" width="2.28" height="1.00"/><rect x="50.04" y="165.00" width="4.56" height="1.00"/><rect x="57.64" y="165.00" width="3.80" height="1.00"/><rect x="65.24" y="165.00" width="4.56" height="1.00"/><rect x="72.84" y="165.00" width="7.60" height="1.00"/><rect x="81.96" y="165.00" width="7.60" height="1.00"/><rect x="91.08" y="165.00" width="5.32" height="1.00"/><rect x="97.92" y="165.00" width="0.76" height="1.00"/><rect x="100.96" y="165.00" width="1.52" height="1.00"/><rect x="104.00" y="165.00" width="3.80" height="1.00"/><rect x="109.32" y="165.00" width="3.80" height="1.00"/><rect x="114.64" y="165.00" width="3.80" height="1.00"/><rect x="28.00" y="166.00" width="1.52" height="1.00"/><rect x="37.88" y="166.00" width="6.08" height="1.00"/><rect x="44.72" y="166.00" width="2.28" height="1.00"/><rect x="50.04" y="166.00" width="5.32" height="1.00"/><rect x="57.64" y="166.00" width="3.80" height="1.00"/><rect x="65.24" y="166.00" width="4.56" height="1.00"/><rect x="72.84" y="166.00" width="7.60" height="1.00"/><rect x="81.96" y="166.00" width="7.60" height="1.00"/><rect x="91.08" y="166.00" width="5.32" height="1.00"/><rect x="97.92" y="166.00" width="0.76" height="1.00"/><rect x="100.96" y="166.00" width="1.52" height="1.00"/><rect x="104.00" y="166.00" width="3.80" height="1.00"/><rect x="109.32" y="166.00" width="3.80" height="1.00"/><rect x="114.64" y="166.00" width="3.80" height="1.00"/><rect x="28.00" y="167.00" width="1.52" height="1.00"/><rect x="37.88" y="167.00" width="6.08" height="1.00"/><rect x="44.72" y="167.00" width="2.28" height="1.00"/><rect x="50.04" y="167.00" width="5.32" height="1.00"/><rect x="57.64" y="167.00" width="3.80" height="1.00"/><rect x="65.24" y="167.00" width="3.80" height="1.00"/><rect x="72.84" y="167.00" width="7.60" height="1.00"/><rect x="81.96" y="167.00" width="7.60" height="1.00"/><rect x="91.08" y="167.00" width="5.32" height="1.00"/><rect x="97.92" y="167.00" width="0.76" height="1.00"/><rect x="100.96" y="167.00" width="1.52" height="1.00"/><rect x="104.00" y="167.00" width="3.80" height="1.00"/><rect x="109.32" y="167.00" width="3.80" height="1.00"/><rect x="114.64" y="167.00" width="3.80" height="1.00"/><rect x="28.00" y="169.00" width="1.52" height="1.00"/><rect x="37.88" y="169.00" width="6.08" height="1.00"/><rect x="44.72" y="169.00" width="2.28" height="1.00"/><rect x="50.04" y="169.00" width="5.32" height="1.00"/><rect x="57.64" y="169.00" width="3.80" height="1.00"/><rect x="65.24" y="169.00" width="3.80" height="1.00"/><rect x="72.84" y="169.00" width="7.60" height="1.00"/><rect x="81.96" y="169.00" width="7.60" height="1.00"/><rect x="91.08" y="169.00" width="5.32" height="1.00"/><rect x="97.92" y="169.00" width="0.76" height="1.00"/><rect x="100.96" y="169.00" width="1.52" height="1.00"/><rect x="104.00" y="169.00" width="3.80" height="1.00"/><rect x="109.32" y="169.00" width="3.80" height="1.00"/><rect x="114.64" y="169.00" width="3.80" height="1.00"/><rect x="28.00" y="170.00" width="1.52" height="1.00"/><rect x="37.88" y="170.00" width="6.08" height="1.00"/><rect x="44.72" y="170.00" width="2.28" height="1.00"/><rect x="50.04" y="170.00" width="5.32" height="1.00"/><rect x="57.64" y="170.00" width="3.80" height="1.00"/><rect x="65.24" y="170.00" width="4.56" height="1.00"/><rect x="72.84" y="170.00" width="7.60" height="1.00"/><rect x="81.96" y="170.00" width="7.60" height="1.00"/><rect x="91.08" y="170.00" width="5.32" height="1.00"/><rect x="97.92" y="170.00" width="0.76" height="1.00"/><rect x="100.96" y="170.00" width="1.52" height="1.00"/><rect x="104.00" y="170.00" width="3.80" height="1.00"/><rect x="109.32" y="170.00" width="3.80" height="1.00"/><rect x="114.64" y="170.00" width="3.80" height="1.00"/><rect x="28.00" y="171.00" width="1.52" height="1.00"/><rect x="37.88" y="171.00" width="6.08" height="1.00"/><rect x="44.72" y="171.00" width="2.28" height="1.00"/><rect x="50.04" y="171.00" width="5.32" height="1.00"/><rect x="57.64" y="171.00" width="3.80" height="1.00"/><rect x="65.24" y="171.00" width="4.56" height="1.00"/><rect x="72.84" y="171.00" width="7.60" height="1.00"/><rect x="81.96" y="171.00" width="7.60" height="1.00"/><rect x="91.08" y="171.00" width="5.32" height="1.00"/><rect x="97.92" y="171.00" width="0.76" height="1.00"/><rect x="100.96" y="171.00" width="1.52" height="1.00"/><rect x="104.00" y="171.00" width="3.80" height="1.00"/><rect x="109.32" y="171.00" width="3.80" height="1.00"/><rect x="114.64" y="171.00" width="3.80" height="1.00"/><rect x="28.00" y="172.00" width="1.52" height="1.00"/><rect x="37.88" y="172.00" width="6.08" height="1.00"/><rect x="44.72" y="172.00" width="2.28" height="1.00"/><rect x="50.04" y="172.00" width="5.32" height="1.00"/><rect x="57.64" y="172.00" width="3.80" height="1.00"/><rect x="65.24" y="172.00" width="3.80" height="1.00"/><rect x="72.84" y="172.00" width="7.60" height="1.00"/><rect x="81.96" y="172.00" width="7.60" height="1.00"/><rect x="91.08" y="172.00" width="5.32" height="1.00"/><rect x="97.92" y="172.00" width="0.76" height="1.00"/><rect x="100.96" y="172.00" width="1.52" height="1.00"/><rect x="104.00" y="172.00" width="3.80" height="1.00"/><rect x="109.32" y="172.00" width="3.80" height="1.00"/><rect x="114.64" y="172.00" width="3.80" height="1.00"/><rect x="28.00" y="173.00" width="1.52" height="1.00"/><rect x="37.88" y="173.00" width="6.08" height="1.00"/><rect x="44.72" y="173.00" width="2.28" height="1.00"/><rect x="50.04" y="173.00" width="5.32" height="1.00"/><rect x="57.64" y="173.00" width="3.80" height="1.00"/><rect x="65.24" y="173.00" width="3.80" height="1.00"/><rect x="72.84" y="173.00" width="7.60" height="1.00"/><rect x="81.96" y="173.00" width="7.60" height="1.00"/><rect x="91.08" y="173.00" width="5.32" height="1.00"/><rect x="97.92" y="173.00" width="0.76" height="1.00"/><rect x="100.96" y="173.00" width="1.52" height="1.00"/><rect x="104.00" y="173.00" width="3.80" height="1.00"/><rect x="109.32" y="173.00" width="3.80" height="1.00"/><rect x="114.64" y="173.00" width="3.80" height="1.00"/><rect x="28.00" y="175.00" width="1.52" height="1.00"/><rect x="37.88" y="175.00" width="6.08" height="1.00"/><rect x="44.72" y="175.00" width="2.28" height="1.00"/><rect x="50.04" y="175.00" width="5.32" height="1.00"/><rect x="57.64" y="175.00" width="3.80" height="1.00"/><rect x="65.24" y="175.00" width="3.80" height="1.00"/><rect x="72.84" y="175.00" width="7.60" height="1.00"/><rect x="81.96" y="175.00" width="7.60" height="1.00"/><rect x="91.08" y="175.00" width="5.32" height="1.00"/><rect x="97.92" y="175.00" width="0.76" height="1.00"/><rect x="100.96" y="175.00" width="1.52" height="1.00"/><rect x="104.00" y="175.00" width="3.80" height="1.00"/><rect x="109.32" y="175.00" width="3.80" height="1.00"/><rect x="114.64" y="175.00" width="3.80" height="1.00"/><rect x="28.00" y="176.00" width="1.52" height="1.00"/><rect x="37.88" y="176.00" width="6.08" height="1.00"/><rect x="44.72" y="176.00" width="2.28" height="1.00"/><rect x="50.04" y="176.00" width="5.32" height="1.00"/><rect x="57.64" y="176.00" width="3.80" height="1.00"/><rect x="65.24" y="176.00" width="3.80" height="1.00"/><rect x="72.84" y="176.00" width="7.60" height="1.00"/><rect x="81.96" y="176.00" width="7.60" height="1.00"/><rect x="91.08" y="176.00" width="5.32" height="1.00"/><rect x="97.92" y="176.00" width="0.76" height="1.00"/><rect x="100.96" y="176.00" width="1.52" height="1.00"/><rect x="104.00" y="176.00" width="3.80" height="1.00"/><rect x="109.32" y="176.00" width="3.80" height="1.00"/><rect x="114.64" y="176.00" width="3.80" height="1.00"/><rect x="28.00" y="177.00" width="1.52" height="1.00"/><rect x="37.88" y="177.00" width="6.08" height="1.00"/><rect x="44.72" y="177.00" width="2.28" height="1.00"/><rect x="50.04" y="177.00" width="4.56" height="1.00"/><rect x="57.64" y="177.00" width="3.80" height="1.00"/><rect x="65.24" y="177.00" width="4.56" height="1.00"/><rect x="72.84" y="177.00" width="7.60" height="1.00"/><rect x="81.96" y="177.00" width="7.60" height="1.00"/><rect x="91.08" y="177.00" width="5.32" height="1.00"/><rect x="97.92" y="177.00" width="0.76" height="1.00"/><rect x="100.96" y="177.00" width="1.52" height="1.00"/><rect x="104.00" y="177.00" width="3.80" height="1.00"/><rect x="109.32" y="177.00" width="3.80" height="1.00"/><rect x="114.64" y="177.00" width="3.80" height="1.00"/><rect x="28.00" y="178.00" width="1.52" height="1.00"/><rect x="37.88" y="178.00" width="6.08" height="1.00"/><rect x="44.72" y="178.00" width="2.28" height="1.00"/><rect x="50.04" y="178.00" width="5.32" height="1.00"/><rect x="57.64" y="178.00" width="3.80" height="1.00"/><rect x="65.24" y="178.00" width="4.56" height="1.00"/><rect x="72.84" y="178.00" width="7.60" height="1.00"/><rect x="81.96" y="178.00" width="7.60" height="1.00"/><rect x="91.08" y="178.00" width="5.32" height="1.00"/><rect x="97.92" y="178.00" width="0.76" height="1.00"/><rect x="100.96" y="178.00" width="1.52" height="1.00"/><rect x="104.00" y="178.00" width="3.80" height="1.00"/><rect x="109.32" y="178.00" width="3.80" height="1.00"/><rect x="114.64" y="178.00" width="3.80" height="1.00"/><rect x="28.00" y="179.00" width="1.52" height="1.00"/><rect x="37.88" y="179.00" width="6.08" height="1.00"/><rect x="44.72" y="179.00" width="2.28" height="1.00"/><rect x="50.04" y="179.00" width="4.56" height="1.00"/><rect x="57.64" y="179.00" width="3.80" height="1.00"/><rect x="65.24" y="179.00" width="3.80" height="1.00"/><rect x="72.84" y="179.00" width="7.60" height="1.00"/><rect x="81.96" y="179.00" width="7.60" height="1.00"/><rect x="91.08" y="179.00" width="5.32" height="1.00"/><rect x="97.92" y="179.00" width="0.76" height="1.00"/><rect x="100.96" y="179.00" width="1.52" height="1.00"/><rect x="104.00" y="179.00" width="3.80" height="1.00"/><rect x="109.32" y="179.00" width="3.80" height="1.00"/><rect x="114.64" y="179.00" width="3.80" height="1.00"/><rect x="28.00" y="181.00" width="1.52" height="1.00"/><rect x="37.88" y="181.00" width="6.08" height="1.00"/><rect x="44.72" y="181.00" width="2.28" height="1.00"/><rect x="50.04" y="181.00" width="4.56" height="1.00"/><rect x="57.64" y="181.00" width="3.80" height="1.00"/><rect x="65.24" y="181.00" width="3.80" height="1.00"/><rect x="72.84" y="181.00" width="7.60" height="1.00"/><rect x="81.96" y="181.00" width="7.60" height="1.00"/><rect x="91.08" y="181.00" width="5.32" height="1.00"/><rect x="97.92" y="181.00" width="0.76" height="1.00"/><rect x="100.96" y="181.00" width="1.52" height="1.00"/><rect x="104.00" y="181.00" width="3.80" height="1.00"/><rect x="109.32" y="181.00" width="3.80" height="1.00"/><rect x="114.64" y="181.00" width="3.80" height="1.00"/><rect x="28.00" y="182.00" width="1.52" height="1.00"/><rect x="37.88" y="182.00" width="6.08" height="1.00"/><rect x="44.72" y="182.00" width="2.28" height="1.00"/><rect x="50.04" y="182.00" width="4.56" height="1.00"/><rect x="57.64" y="182.00" width="3.80" height="1.00"/><rect x="65.24" y="182.00" width="3.80" height="1.00"/><rect x="72.84" y="182.00" width="7.60" height="1.00"/><rect x="81.96" y="182.00" width="7.60" height="1.00"/><rect x="91.08" y="182.00" width="5.32" height="1.00"/><rect x="97.92" y="182.00" width="0.76" height="1.00"/><rect x="100.96" y="182.00" width="1.52" height="1.00"/><rect x="104.00" y="182.00" width="3.80" height="1.00"/><rect x="109.32" y="182.00" width="3.80" height="1.00"/><rect x="114.64" y="182.00" width="3.80" height="1.00"/><rect x="28.00" y="183.00" width="1.52" height="1.00"/><rect x="37.88" y="183.00" width="6.08" height="1.00"/><rect x="44.72" y="183.00" width="2.28" height="1.00"/><rect x="50.04" y="183.00" width="5.32" height="1.00"/><rect x="57.64" y="183.00" width="3.80" height="1.00"/><rect x="65.24" y="183.00" width="3.80" height="1.00"/><rect x="72.84" y="183.00" width="7.60" height="1.00"/><rect x="81.96" y="183.00" width="7.60" height="1.00"/><rect x="91.08" y="183.00" width="5.32" height="1.00"/><rect x="97.92" y="183.00" width="0.76" height="1.00"/><rect x="100.96" y="183.00" width="1.52" height="1.00"/><rect x="104.00" y="183.00" width="3.80" height="1.00"/><rect x="109.32" y="183.00" width="3.80" height="1.00"/><rect x="114.64" y="183.00" width="3.80" height="1.00"/><rect x="28.00" y="184.00" width="1.52" height="1.00"/><rect x="37.88" y="184.00" width="6.08" height="1.00"/><rect x="44.72" y="184.00" width="2.28" height="1.00"/><rect x="50.04" y="184.00" width="5.32" height="1.00"/><rect x="57.64" y="184.00" width="3.80" height="1.00"/><rect x="65.24" y="184.00" width="4.56" height="1.00"/><rect x="72.84" y="184.00" width="7.60" height="1.00"/><rect x="81.96" y="184.00" width="7.60" height="1.00"/><rect x="91.08" y="184.00" width="5.32" height="1.00"/><rect x="97.92" y="184.00" width="0.76" height="1.00"/><rect x="100.96" y="184.00" width="1.52" height="1.00"/><rect x="104.00" y="184.00" width="3.80" height="1.00"/><rect x="109.32" y="184.00" width="3.80" height="1.00"/><rect x="114.64" y="184.00" width="3.80" height="1.00"/><rect x="28.00" y="185.00" width="1.52" height="1.00"/><rect x="37.88" y="185.00" width="6.08" height="1.00"/><rect x="44.72" y="185.00" width="2.28" height="1.00"/><rect x="50.04" y="185.00" width="5.32" height="1.00"/><rect x="57.64" y="185.00" width="3.80" height="1.00"/><rect x="65.24" y="185.00" width="4.56" height="1.00"/><rect x="72.84" y="185.00" width="7.60" height="1.00"/><rect x="81.96" y="185.00" width="7.60" height="1.00"/><rect x="91.08" y="185.00" width="5.32" height="1.00"/><rect x="97.92" y="185.00" width="0.76" height="1.00"/><rect x="100.96" y="185.00" width="1.52" height="1.00"/><rect x="104.00" y="185.00" width="3.80" height="1.00"/><rect x="109.32" y="185.00" width="3.80" height="1.00"/><rect x="114.64" y="185.00" width="3.80" height="1.00"/><rect x="28.00" y="187.00" width="1.52" height="1.00"/><rect x="37.88" y="187.00" width="6.08" height="1.00"/><rect x="44.72" y="187.00" width="2.28" height="1.00"/><rect x="50.04" y="187.00" width="5.32" height="1.00"/><rect x="57.64" y="187.00" width="3.80" height="1.00"/><rect x="65.24" y="187.00" width="3.80" height="1.00"/><rect x="72.84" y="187.00" width="7.60" height="1.00"/><rect x="81.96" y="187.00" width="7.60" height="1.00"/><rect x="91.08" y="187.00" width="5.32" height="1.00"/><rect x="97.92" y="187.00" width="0.76" height="1.00"/><rect x="100.96" y="187.00" width="1.52" height="1.00"/><rect x="104.00" y="187.00" width="3.80" height="1.00"/><rect x="109.32" y="187.00" width="3.80" height="1.00"/><rect x="114.64" y="187.00" width="3.80" height="1.00"/><rect x="28.00" y="188.00" width="1.52" height="1.00"/><rect x="37.88" y="188.00" width="6.08" height="1.00"/><rect x="44.72" y="188.00" width="2.28" height="1.00"/><rect x="50.04" y="188.00" width="5.32" height="1.00"/><rect x="57.64" y="188.00" width="3.80" height="1.00"/><rect x="65.24" y="188.00" width="4.56" height="1.00"/><rect x="72.84" y="188.00" width="7.60" height="1.00"/><rect x="81.96" y="188.00" width="7.60" height="1.00"/><rect x="91.08" y="188.00" width="5.32" height="1.00"/><rect x="97.92" y="188.00" width="0.76" height="1.00"/><rect x="100.96" y="188.00" width="1.52" height="1.00"/><rect x="104.00" y="188.00" width="3.80" height="1.00"/><rect x="109.32" y="188.00" width="3.80" height="1.00"/><rect x="114.64" y="188.00" width="3.80" height="1.00"/><rect x="28.00" y="189.00" width="1.52" height="1.00"/><rect x="37.88" y="189.00" width="6.08" height="1.00"/><rect x="44.72" y="189.00" width="2.28" height="1.00"/><rect x="50.04" y="189.00" width="5.32" height="1.00"/><rect x="57.64" y="189.00" width="3.80" height="1.00"/><rect x="65.24" y="189.00" width="3.80" height="1.00"/><rect x="72.84" y="189.00" width="7.60" height="1.00"/><rect x="81.96" y="189.00" width="7.60" height="1.00"/><rect x="91.08" y="189.00" width="5.32" height="1.00"/><rect x="97.92" y="189.00" width="0.76" height="1.00"/><rect x="100.96" y="189.00" width="1.52" height="1.00"/><rect x="104.00" y="189.00" width="3.80" height="1.00"/><rect x="109.32" y="189.00" width="3.80" height="1.00"/><rect x="114.64" y="189.00" width="3.80" height="1.00"/><rect x="28.00" y="190.00" width="1.52" height="1.00"/><rect x="37.88" y="190.00" width="6.08" height="1.00"/><rect x="44.72" y="190.00" width="2.28" height="1.00"/><rect x="50.04" y="190.00" width="5.32" height="1.00"/><rect x="57.64" y="190.00" width="3.80" height="1.00"/><rect x="65.24" y="190.00" width="4.56" height="1.00"/><rect x="72.84" y="190.00" width="7.60" height="1.00"/><rect x="81.96" y="190.00" width="7.60" height="1.00"/><rect x="91.08" y="190.00" width="5.32" height="1.00"/><rect x="97.92" y="190.00" width="0.76" height="1.00"/><rect x="100.96" y="190.00" width="1.52" height="1.00"/><rect x="104.00" y="190.00" width="3.80" height="1.00"/><rect x="109.32" y="190.00" width="3.80" height="1.00"/><rect x="114.64" y="190.00" width="3.80" height="1.00"/><rect x="28.00" y="191.00" width="1.52" height="1.00"/><rect x="37.88" y="191.00" width="6.08" height="1.00"/><rect x="44.72" y="191.00" width="2.28" height="1.00"/><rect x="50.04" y="191.00" width="5.32" height="1.00"/><rect x="57.64" y="191.00" width="3.80" height="1.00"/><rect x="65.24" y="191.00" width="3.80" height="1.00"/><rect x="72.84" y="191.00" width="7.60" height="1.00"/><rect x="81.96" y="191.00" width="7.60" height="1.00"/><rect x="91.08" y="191.00" width="5.32" height="1.00"/><rect x="97.92" y="191.00" width="0.76" height="1.00"/><rect x="100.96" y="191.00" width="1.52" height="1.00"/><rect x="104.00" y="191.00" width="3.80" height="1.00"/><rect x="109.32" y="191.00" width="3.80" height="1.00"/><rect x="114.64" y="191.00" width="3.80" height="1.00"/><rect x="28.00" y="193.00" width="1.52" height="1.00"/><rect x="37.88" y="193.00" width="6.08" height="1.00"/><rect x="44.72" y="193.00" width="2.28" height="1.00"/><rect x="50.04" y="193.00" width="4.56" height="1.00"/><rect x="57.64" y="193.00" width="3.80" height="1.00"/><rect x="65.24" y="193.00" width="4.56" height="1.00"/><rect x="72.84" y="193.00" width="7.60" height="1.00"/><rect x="81.96" y="193.00" width="7.60" height="1.00"/><rect x="91.08" y="193.00" width="5.32" height="1.00"/><rect x="97.92" y="193.00" width="0.76" height="1.00"/><rect x="100.96" y="193.00" width="1.52" height="1.00"/><rect x="104.00" y="193.00" width="3.80" height="1.00"/><rect x="109.32" y="193.00" width="3.80" height="1.00"/><rect x="114.64" y="193.00" width="3.80" height="1.00"/><rect x="28.00" y="194.00" width="1.52" height="1.00"/><rect x="37.88" y="194.00" width="6.08" height="1.00"/><rect x="44.72" y="194.00" width="2.28" height="1.00"/><rect x="50.04" y="194.00" width="5.32" height="1.00"/><rect x="57.64" y="194.00" width="3.80" height="1.00"/><rect x="65.24" y="194.00" width="3.80" height="1.00"/><rect x="72.84" y="194.00" width="7.60" height="1.00"/><rect x="81.96" y="194.00" width="7.60" height="1.00"/><rect x="91.08" y="194.00" width="5.32" height="1.00"/><rect x="97.92" y="194.00" width="0.76" height="1.00"/><rect x="100.96" y="194.00" width="1.52" height="1.00"/><rect x="104.00" y="194.00" width="3.80" height="1.00"/><rect x="109.32" y="194.00" width="3.80" height="1.00"/><rect x="114.64" y="194.00" width="3.80" height="1.00"/><rect x="28.00" y="195.00" width="1.52" height="1.00"/><rect x="37.88" y="195.00" width="6.08" height="1.00"/><rect x="44.72" y="195.00" width="2.28" height="1.00"/><rect x="50.04" y="195.00" width="5.32" height="1.00"/><rect x="57.64" y="195.00" width="3.80" height="1.00"/><rect x="65.24" y="195.00" width="3.80" height="1.00"/><rect x="72.84" y="195.00" width="7.60" height="1.00"/><rect x="81.96" y="195.00" width="7.60" height="1.00"/><rect x="91.08" y="195.00" width="5.32" height="1.00"/><rect x="97.92" y="195.00" width="0.76" height="1.00"/><rect x="100.96" y="195.00" width="1.52" height="1.00"/><rect x="104.00" y="195.00" width="3.80" height="1.00"/><rect x="109.32" y="195.00" width="3.80" height="1.00"/><rect x="114.64" y="195.00" width="3.80" height="1.00"/><rect x="28.00" y="196.00" width="1.52" height="1.00"/><rect x="37.88" y="196.00" width="6.08" height="1.00"/><rect x="44.72" y="196.00" width="2.28" height="1.00"/><rect x="50.04" y="196.00" width="5.32" height="1.00"/><rect x="57.64" y="196.00" width="3.80" height="1.00"/><rect x="65.24" y="196.00" width="3.80" height="1.00"/><rect x="72.84" y="196.00" width="7.60" height="1.00"/><rect x="81.96" y="196.00" width="7.60" height="1.00"/><rect x="91.08" y="196.00" width="5.32" height="1.00"/><rect x="97.92" y="196.00" width="0.76" height="1.00"/><rect x="100.96" y="196.00" width="1.52" height="1.00"/><rect x="104.00" y="196.00" width="3.80" height="1.00"/><rect x="109.32" y="196.00" width="3.80" height="1.00"/><rect x="114.64" y="196.00" width="3.80" height="1.00"/><rect x="28.00" y="197.00" width="1.52" height="1.00"/><rect x="37.88" y="197.00" width="6.08" height="1.00"/><rect x="44.72" y="197.00" width="2.28" height="1.00"/><rect x="50.04" y="197.00" width="4.56" height="1.00"/><rect x="57.64" y="197.00" width="3.80" height="1.00"/><rect x="65.24" y="197.00" width="4.56" height="1.00"/><rect x="72.84" y="197.00" width="7.60" height="1.00"/><rect x="81.96" y="197.00" width="7.60" height="1.00"/><rect x="91.08" y="197.00" width="5.32" height="1.00"/><rect x="97.92" y="197.00" width="0.76" height="1.00"/><rect x="100.96" y="197.00" width="1.52" height="1.00"/><rect x="104.00" y="197.00" width="3.80" height="1.00"/><rect x="109.32" y="197.00" width="3.80" height="1.00"/><rect x="114.64" y="197.00" width="3.80" height="1.00"/><rect x="28.00" y="199.00" width="1.52" height="1.00"/><rect x="37.88" y="199.00" width="6.08" height="1.00"/><rect x="44.72" y="199.00" width="2.28" height="1.00"/><rect x="50.04" y="199.00" width="4.56" height="1.00"/><rect x="57.64" y="199.00" width="3.80" height="1.00"/><rect x="65.24" y="199.00" width="3.80" height="1.00"/><rect x="72.84" y="199.00" width="7.60" height="1.00"/><rect x="81.96" y="199.00" width="7.60" height="1.00"/><rect x="91.08" y="199.00" width="5.32" height="1.00"/><rect x="97.92" y="199.00" width="0.76" height="1.00"/><rect x="100.96" y="199.00" width="1.52" height="1.00"/><rect x="104.00" y="199.00" width="3.80" height="1.00"/><rect x="109.32" y="199.00" width="3.80" height="1.00"/><rect x="114.64" y="199.00" width="3.80" height="1.00"/><rect x="28.00" y="200.00" width="1.52" height="1.00"/><rect x="37.88" y="200.00" width="6.08" height="1.00"/><rect x="44.72" y="200.00" width="2.28" height="1.00"/><rect x="50.04" y="200.00" width="5.32" height="1.00"/><rect x="57.64" y="200.00" width="3.80" height="1.00"/><rect x="65.24" y="200.00" width="3.80" height="1.00"/><rect x="72.84" y="200.00" width="7.60" height="1.00"/><rect x="81.96" y="200.00" width="7.60" height="1.00"/><rect x="91.08" y="200.00" width="5.32" height="1.00"/><rect x="97.92" y="200.00" width="0.76" height="1.00"/><rect x="100.96" y="200.00" width="1.52" height="1.00"/><rect x="104.00" y="200.00" width="3.80" height="1.00"/><rect x="109.32" y="200.00" width="3.80" height="1.00"/><rect x="114.64" y="200.00" width="3.80" height="1.00"/><rect x="28.00" y="201.00" width="1.52" height="1.00"/><rect x="37.88" y="201.00" width="6.08" height="1.00"/><rect x="44.72" y="201.00" width="2.28" height="1.00"/><rect x="50.04" y="201.00" width="4.56" height="1.00"/><rect x="57.64" y="201.00" width="3.80" height="1.00"/><rect x="65.24" y="201.00" width="3.80" height="1.00"/><rect x="72.84" y="201.00" width="7.60" height="1.00"/><rect x="81.96" y="201.00" width="7.60" height="1.00"/><rect x="91.08" y="201.00" width="5.32" height="1.00"/><rect x="97.92" y="201.00" width="0.76" height="1.00"/><rect x="100.96" y="201.00" width="1.52" height="1.00"/><rect x="104.00" y="201.00" width="3.80" height="1.00"/><rect x="109.32" y="201.00" width="3.80" height="1.00"/><rect x="114.64" y="201.00" width="3.80" height="1.00"/><rect x="28.00" y="202.00" width="1.52" height="1.00"/><rect x="37.88" y="202.00" width="6.08" height="1.00"/><rect x="44.72" y="202.00" width="2.28" height="1.00"/><rect x="50.04" y="202.00" width="5.32" height="1.00"/><rect x="57.64" y="202.00" width="3.80" height="1.00"/><rect x="65.24" y="202.00" width="4.56" height="1.00"/><rect x="72.84" y="202.00" width="7.60" height="1.00"/><rect x="81.96" y="202.00" width="7.60" height="1.00"/><rect x="91.08" y="202.00" width="5.32" height="1.00"/><rect x="97.92" y="202.00" width="0.76" height="1.00"/><rect x="100.96" y="202.00" width="1.52" height="1.00"/><rect x="104.00" y="202.00" width="3.80" height="1.00"/><rect x="109.32" y="202.00" width="3.80" height="1.00"/><rect x="114.64" y="202.00" width="3.80" height="1.00"/><rect x="28.00" y="203.00" width="1.52" height="1.00"/><rect x="37.88" y="203.00" width="6.08" height="1.00"/><rect x="44.72" y="203.00" width="2.28" height="1.00"/><rect x="50.04" y="203.00" width="5.32" height="1.00"/><rect x="57.64" y="203.00" width="3.80" height="1.00"/><rect x="65.24" y="203.00" width="3.80" height="1.00"/><rect x="72.84" y="203.00" width="7.60" height="1.00"/><rect x="81.96" y="203.00" width="7.60" height="1.00"/><rect x="91.08" y="203.00" width="5.32" height="1.00"/><rect x="97.92" y="203.00" width="0.76" height="1.00"/><rect x="100.96" y="203.00" width="1.52" height="1.00"/><rect x="104.00" y="203.00" width="3.80" height="1.00"/><rect x="109.32" y="203.00" width="3.80" height="1.00"/><rect x="114.64" y="203.00" width="3.80" height="1.00"/><rect x="28.00" y="205.00" width="1.52" height="1.00"/><rect x="37.88" y="205.00" width="6.08" height="1.00"/><rect x="44.72" y="205.00" width="2.28" height="1.00"/><rect x="50.04" y="205.00" width="5.32" height="1.00"/><rect x="57.64" y="205.00" width="3.80" height="1.00"/><rect x="65.24" y="205.00" width="3.80" height="1.00"/><rect x="72.84" y="205.00" width="7.60" height="1.00"/><rect x="81.96" y="205.00" width="7.60" height="1.00"/><rect x="91.08" y="205.00" width="5.32" height="1.00"/><rect x="97.92" y="205.00" width="0.76" height="1.00"/><rect x="100.96" y="205.00" width="1.52" height="1.00"/><rect x="104.00" y="205.00" width="3.80" height="1.00"/><rect x="109.32" y="205.00" width="3.80" height="1.00"/><rect x="114.64" y="205.00" width="3.80" height="1.00"/><rect x="28.00" y="206.00" width="1.52" height="1.00"/><rect x="37.88" y="206.00" width="6.08" height="1.00"/><rect x="44.72" y="206.00" width="2.28" height="1.00"/><rect x="50.04" y="206.00" width="4.56" height="1.00"/><rect x="57.64" y="206.00" width="3.80" height="1.00"/><rect x="65.24" y="206.00" width="4.56" height="1.00"/><rect x="72.84" y="206.00" width="7.60" height="1.00"/><rect x="81.96" y="206.00" width="7.60" height="1.00"/><rect x="91.08" y="206.00" width="5.32" height="1.00"/><rect x="97.92" y="206.00" width="0.76" height="1.00"/><rect x="100.96" y="206.00" width="1.52" height="1.00"/><rect x="104.00" y="206.00" width="3.80" height="1.00"/><rect x="109.32" y="206.00" width="3.80" height="1.00"/><rect x="114.64" y="206.00" width="3.80" height="1.00"/><rect x="28.00" y="207.00" width="3.80" height="1.00"/><rect x="32.56" y="207.00" width="7.60" height="1.00"/><rect x="28.00" y="209.00" width="6.08" height="1.00"/><rect x="34.84" y="209.00" width="6.84" height="1.00"/><rect x="28.00" y="211.00" width="1.52" height="1.00"/><rect x="37.88" y="211.00" width="3.04" height="1.00"/><rect x="44.72" y="211.00" width="0.76" height="1.00"/><rect x="53.84" y="211.00" width="0.76" height="1.00"/><rect x="62.96" y="211.00" width="0.76" height="1.00"/><rect x="28.00" y="212.00" width="6.84" height="1.00"/><rect x="44.72" y="212.00" width="7.60" height="1.00"/><rect x="53.84" y="212.00" width="7.60" height="1.00"/><rect x="62.96" y="212.00" width="7.60" height="1.00"/><rect x="28.00" y="214.00" width="5.32" height="1.00"/><rect x="34.08" y="214.00" width="17.48" height="1.00"/><rect x="28.00" y="215.00" width="1.52" height="1.00"/><rect x="37.88" y="215.00" width="3.04" height="1.00"/><rect x="44.72" y="215.00" width="3.04" height="1.00"/><rect x="50.04" y="215.00" width="1.52" height="1.00"/><rect x="57.64" y="215.00" width="1.52" height="1.00"/><rect x="65.24" y="215.00" width="1.52" height="1.00"/><rect x="72.84" y="215.00" width="0.76" height="1.00"/><rect x="81.96" y="215.00" width="0.76" height="1.00"/><rect x="91.08" y="215.00" width="0.76" height="1.00"/><rect x="97.92" y="215.00" width="0.76" height="1.00"/><rect x="100.96" y="215.00" width="2.28" height="1.00"/><rect x="104.00" y="215.00" width="3.04" height="1.00"/><rect x="109.32" y="215.00" width="3.80" height="1.00"/><rect x="114.64" y="215.00" width="3.80" height="1.00"/><rect x="119.96" y="215.00" width="2.28" height="1.00"/><rect x="28.00" y="217.00" width="1.52" height="5.00"/><rect x="37.88" y="217.00" width="6.08" height="5.00"/><rect x="44.72" y="217.00" width="2.28" height="5.00"/><rect x="50.04" y="217.00" width="5.32" height="5.00"/><rect x="57.64" y="217.00" width="3.80" height="5.00"/><rect x="65.24" y="217.00" width="3.80" height="5.00"/><rect x="72.84" y="217.00" width="7.60" height="5.00"/><rect x="81.96" y="217.00" width="7.60" height="5.00"/><rect x="91.08" y="217.00" width="5.32" height="5.00"/><rect x="97.92" y="217.00" width="0.76" height="5.00"/><rect x="100.96" y="217.00" width="1.52" height="5.00"/><rect x="104.00" y="217.00" width="3.80" height="5.00"/><rect x="109.32" y="217.00" width="3.80" height="5.00"/><rect x="114.64" y="217.00" width="3.80" height="5.00"/></g><g fill="#000" shape-rendering="crispEdges"><rect x="28.00" y="264.40" width="1.52" height="1.00"/><rect x="37.88" y="264.40" width="6.08" height="1.00"/><rect x="44.72" y="264.40" width="2.28" height="1.00"/><rect x="50.04" y="264.40" width="4.56" height="1.00"/><rect x="57.64" y="264.40" width="3.80" height="1.00"/><rect x="65.24" y="264.40" width="3.80" height="1.00"/><rect x="72.84" y="264.40" width="7.60" height="1.00"/><rect x="81.96" y="264.40" width="7.60" height="1.00"/><rect x="91.08" y="264.40" width="5.32" height="1.00"/><rect x="97.92" y="264.40" width="0.76" height="1.00"/><rect x="100.96" y="264.40" width="1.52" height="1.00"/><rect x="104.00" y="264.40" width="3.80" height="1.00"/><rect x="109.32" y="264.40" width="3.80" height="1.00"/><rect x="114.64" y="264.40" width="3.80" height="1.00"/><rect x="28.00" y="266.50" width="1.52" height="1.00"/><rect x="37.88" y="266.50" width="6.08" height="1.00"/><rect x="44.72" y="266.50" width="2.28" height="1.00"/><rect x="50.04" y="266.50" width="4.56" height="1.00"/><rect x="57.64" y="266.50" width="3.80" height="1.00"/><rect x="65.24" y="266.50" width="3.80" height="1.00"/><rect x="72.84" y="266.50" width="7.60" height="1.00"/><rect x="81.96" y="266.50" width="7.60" height="1.00"/><rect x="91.08" y="266.50" width="5.32" height="1.00"/><rect x="97.92" y="266.50" width="0.76" height="1.00"/><rect x="100.96" y="266.50" width="1.52" height="1.00"/><rect x="104.00" y="266.50" width="3.80" height="1.00"/><rect x="109.32" y="266.50" width="3.80" height="1.00"/><rect x="114.64" y="266.50" width="3.80" height="1.00"/><rect x="28.00" y="268.50" width="3.80" height="1.00"/><rect x="32.56" y="268.50" width="7.60" height="1.00"/><rect x="28.00" y="270.30" width="6.08" height="1.00"/><rect x="34.84" y="270.30" width="6.84" height="1.00"/><rect x="28.00" y="273.00" width="6.84" height="1.00"/><rect x="37.88" y="273.00" width="3.04" height="1.00"/><rect x="44.72" y="273.00" width="7.60" height="1.00"/><rect x="53.84" y="273.00" width="7.60" height="1.00"/><rect x="62.96" y="273.00" width="7.60" height="1.00"/><rect x="28.00" y="275.30" width="5.32" height="1.20"/><rect x="34.08" y="275.30" width="17.48" height="1.20"/><rect x="28.00" y="275.80" width="1.52" height="0.80"/><rect x="37.88" y="275.80" width="3.04" height="0.80"/><rect x="44.72" y="275.80" width="3.04" height="0.80"/><rect x="50.04" y="275.80" width="1.52" height="0.80"/><rect x="57.64" y="275.80" width="1.52" height="0.80"/><rect x="65.24" y="275.80" width="1.52" height="0.80"/><rect x="72.84" y="275.80" width="0.76" height="0.80"/><rect x="81.96" y="275.80" width="0.76" height="0.80"/><rect x="91.08" y="275.80" width="0.76" height="0.80"/><rect x="97.92" y="275.80" width="0.76" height="0.80"/><rect x="100.96" y="275.80" width="2.28" height="0.80"/><rect x="104.00" y="275.80" width="3.04" height="0.80"/><rect x="109.32" y="275.80" width="3.80" height="0.80"/><rect x="114.64" y="275.80" width="3.80" height="0.80"/><rect x="119.96" y="275.80" width="2.28" height="0.80"/><rect x="28.00" y="278.00" width="1.52" height="4.60"/><rect x="37.88" y="278.00" width="6.08" height="4.60"/><rect x="44.72" y="278.00" width="2.28" height="4.60"/><rect x="50.04" y="278.00" width="4.56" height="4.60"/><rect x="57.64" y="278.00" width="3.80" height="4.60"/><rect x="65.24" y="278.00" width="3.80" height="4.60"/><rect x="72.84" y="278.00" width="7.60" height="4.60"/><rect x="81.96" y="278.00" width="7.60" height="4.60"/><rect x="91.08" y="278.00" width="5.32" height="4.60"/><rect x="97.92" y="278.00" width="0.76" height="4.60"/><rect x="100.96" y="278.00" width="1.52" height="4.60"/><rect x="104.00" y="278.00" width="3.80" height="4.60"/><rect x="109.32" y="278.00" width="3.80" height="4.60"/><rect x="114.64" y="278.00" width="3.80" height="4.60"/><rect x="28.00" y="285.30" width="3.80" height="1.00"/><rect x="32.56" y="285.30" width="7.60" height="1.00"/><rect x="28.00" y="288.30" width="4.56" height="1.20"/><rect x="33.32" y="288.30" width="9.12" height="1.20"/><rect x="28.00" y="290.30" width="6.84" height="1.00"/><rect x="44.72" y="290.30" width="7.60" height="1.00"/><rect x="53.84" y="290.30" width="7.60" height="1.00"/><rect x="62.96" y="290.30" width="7.60" height="1.00"/><rect x="28.00" y="293.80" width="1.52" height="1.20"/><rect x="37.88" y="293.80" width="3.04" height="1.20"/><rect x="44.72" y="293.80" width="3.04" height="1.20"/><rect x="50.04" y="293.80" width="1.52" height="1.20"/><rect x="57.64" y="293.80" width="1.52" height="1.20"/><rect x="65.24" y="293.80" width="1.52" height="1.20"/><rect x="72.84" y="293.80" width="0.76" height="1.20"/><rect x="81.96" y="293.80" width="0.76" height="1.20"/><rect x="91.08" y="293.80" width="0.76" height="1.20"/><rect x="97.92" y="293.80" width="0.76" height="1.20"/><rect x="100.96" y="293.80" width="2.28" height="1.20"/><rect x="104.00" y="293.80" width="3.04" height="1.20"/><rect x="109.32" y="293.80" width="3.80" height="1.20"/><rect x="114.64" y="293.80" width="3.80" height="1.20"/><rect x="119.96" y="293.80" width="2.28" height="1.20"/><rect x="28.00" y="294.60" width="1.52" height="1.20"/><rect x="37.88" y="294.60" width="6.08" height="1.20"/><rect x="44.72" y="294.60" width="2.28" height="1.20"/><rect x="50.04" y="294.60" width="4.56" height="1.20"/><rect x="57.64" y="294.60" width="3.80" height="1.20"/><rect x="65.24" y="294.60" width="3.80" height="1.20"/><rect x="72.84" y="294.60" width="7.60" height="1.20"/><rect x="81.96" y="294.60" width="7.60" height="1.20"/><rect x="91.08" y="294.60" width="5.32" height="1.20"/><rect x="97.92" y="294.60" width="0.76" height="1.20"/><rect x="100.96" y="294.60" width="1.52" height="1.20"/><rect x="104.00" y="294.60" width="3.80" height="1.20"/><rect x="109.32" y="294.60" width="3.80" height="1.20"/><rect x="114.64" y="294.60" width="3.80" height="1.20"/><rect x="28.00" y="297.40" width="41.04" height="0.80"/><rect x="28.00" y="299.80" width="0.76" height="1.00"/><rect x="37.88" y="299.80" width="7.60" height="1.00"/><rect x="47.00" y="299.80" width="7.60" height="1.00"/><rect x="56.88" y="299.80" width="19.76" height="1.00"/><rect x="28.00" y="302.20" width="0.76" height="2.40"/><rect x="37.88" y="302.20" width="7.60" height="2.40"/><rect x="47.00" y="302.20" width="7.60" height="2.40"/><rect x="56.88" y="302.20" width="19.76" height="2.40"/><rect x="28.00" y="306.00" width="0.76" height="1.00"/><rect x="37.88" y="306.00" width="7.60" height="1.00"/><rect x="47.00" y="306.00" width="7.60" height="1.00"/><rect x="56.88" y="306.00" width="19.76" height="1.00"/><rect x="28.00" y="308.20" width="0.76" height="2.40"/><rect x="37.88" y="308.20" width="7.60" height="2.40"/><rect x="47.00" y="308.20" width="7.60" height="2.40"/><rect x="56.88" y="308.20" width="19.76" height="2.40"/><rect x="28.00" y="311.60" width="5.32" height="1.00"/><rect x="28.00" y="313.20" width="9.88" height="2.00"/><rect x="38.64" y="313.20" width="5.32" height="2.00"/><rect x="44.72" y="313.20" width="7.60" height="2.00"/><rect x="53.08" y="313.20" width="2.28" height="2.00"/><rect x="56.12" y="313.20" width="3.80" height="2.00"/><rect x="60.68" y="313.20" width="8.36" height="2.00"/><rect x="69.80" y="313.20" width="8.36" height="2.00"/><rect x="78.92" y="313.20" width="5.32" height="2.00"/><rect x="85.00" y="313.20" width="6.84" height="2.00"/><rect x="28.00" y="315.60" width="3.80" height="2.00"/><rect x="32.56" y="315.60" width="8.36" height="2.00"/><rect x="41.68" y="315.60" width="8.36" height="2.00"/><rect x="50.80" y="315.60" width="1.52" height="2.00"/><rect x="53.08" y="315.60" width="5.32" height="2.00"/><rect x="59.16" y="315.60" width="7.60" height="2.00"/><rect x="67.52" y="315.60" width="3.80" height="2.00"/><rect x="72.08" y="315.60" width="3.80" height="2.00"/><rect x="28.00" y="320.00" width="3.80" height="2.00"/><rect x="32.56" y="320.00" width="6.08" height="2.00"/><rect x="39.40" y="320.00" width="8.36" height="2.00"/><rect x="48.52" y="320.00" width="2.28" height="2.00"/><rect x="51.56" y="320.00" width="2.28" height="2.00"/><rect x="54.60" y="320.00" width="10.64" height="2.00"/><rect x="66.00" y="320.00" width="6.08" height="2.00"/><rect x="72.84" y="320.00" width="2.28" height="2.00"/><rect x="75.88" y="320.00" width="6.08" height="2.00"/><rect x="28.00" y="322.40" width="2.28" height="1.50"/><rect x="31.04" y="322.40" width="10.64" height="1.50"/><rect x="42.44" y="322.40" width="6.84" height="1.50"/><rect x="50.04" y="322.40" width="2.28" height="1.50"/><rect x="53.08" y="322.40" width="6.08" height="1.50"/><rect x="59.92" y="322.40" width="6.08" height="1.50"/><rect x="28.00" y="326.40" width="10.64" height="1.80"/><rect x="39.40" y="326.40" width="6.08" height="1.80"/><rect x="46.24" y="326.40" width="6.08" height="1.80"/><rect x="53.08" y="326.40" width="5.32" height="1.80"/><rect x="59.16" y="326.40" width="7.60" height="1.80"/><rect x="67.52" y="326.40" width="3.80" height="1.80"/><rect x="72.08" y="326.40" width="9.88" height="1.80"/><rect x="82.72" y="326.40" width="3.80" height="1.80"/><rect x="87.28" y="326.40" width="3.80" height="1.80"/><rect x="28.00" y="332.60" width="5.32" height="1.30"/><rect x="34.08" y="332.60" width="8.36" height="1.30"/><rect x="28.00" y="335.60" width="1.52" height="0.90"/><rect x="37.88" y="335.60" width="0.76" height="0.90"/><rect x="47.00" y="335.60" width="0.76" height="0.90"/><rect x="56.12" y="335.60" width="0.76" height="0.90"/><rect x="28.00" y="338.30" width="2.00" height="5.00"/><rect x="37.90" y="338.30" width="8.40" height="5.00"/><rect x="47.00" y="338.30" width="8.00" height="5.00"/><rect x="56.00" y="338.30" width="6.60" height="5.00"/><rect x="28.00" y="344.20" width="2.00" height="5.00"/><rect x="37.90" y="344.20" width="8.40" height="5.00"/><rect x="47.00" y="344.20" width="8.00" height="5.00"/><rect x="56.00" y="344.20" width="6.60" height="5.00"/><rect x="28.00" y="350.10" width="2.00" height="5.00"/><rect x="37.90" y="350.10" width="8.40" height="5.00"/><rect x="47.00" y="350.10" width="8.00" height="5.00"/><rect x="56.00" y="350.10" width="6.60" height="5.00"/><rect x="28.00" y="356.00" width="2.00" height="5.00"/><rect x="37.90" y="356.00" width="8.40" height="5.00"/><rect x="47.00" y="356.00" width="8.00" height="5.00"/><rect x="56.00" y="356.00" width="6.60" height="5.00"/><rect x="28.00" y="361.90" width="2.00" height="5.00"/><rect x="37.90" y="361.90" width="8.40" height="5.00"/><rect x="47.00" y="361.90" width="8.00" height="5.00"/><rect x="56.00" y="361.90" width="6.60" height="5.00"/><rect x="28.00" y="367.80" width="2.00" height="5.00"/><rect x="37.90" y="367.80" width="8.40" height="5.00"/><rect x="47.00" y="367.80" width="8.00" height="5.00"/><rect x="56.00" y="367.80" width="6.60" height="5.00"/><rect x="28.00" y="373.70" width="2.00" height="5.00"/><rect x="37.90" y="373.70" width="8.40" height="5.00"/><rect x="47.00" y="373.70" width="8.00" height="5.00"/><rect x="56.00" y="373.70" width="6.60" height="5.00"/><rect x="28.00" y="379.60" width="2.00" height="5.00"/><rect x="37.90" y="379.60" width="8.40" height="5.00"/><rect x="47.00" y="379.60" width="8.00" height="5.00"/><rect x="56.00" y="379.60" width="6.60" height="5.00"/><rect x="28.00" y="385.50" width="2.00" height="5.00"/><rect x="37.90" y="385.50" width="8.40" height="5.00"/><rect x="47.00" y="385.50" width="8.00" height="5.00"/><rect x="56.00" y="385.50" width="6.60" height="5.00"/><rect x="28.00" y="391.40" width="2.00" height="5.00"/><rect x="37.90" y="391.40" width="8.40" height="5.00"/><rect x="47.00" y="391.40" width="8.00" height="5.00"/><rect x="56.00" y="391.40" width="6.60" height="5.00"/><rect x="28.00" y="397.30" width="2.00" height="5.00"/><rect x="37.90" y="397.30" width="8.40" height="5.00"/><rect x="47.00" y="397.30" width="8.00" height="5.00"/><rect x="56.00" y="397.30" width="6.60" height="5.00"/><rect x="28.00" y="403.20" width="2.00" height="5.00"/><rect x="37.90" y="403.20" width="8.40" height="5.00"/><rect x="47.00" y="403.20" width="8.00" height="5.00"/><rect x="56.00" y="403.20" width="6.60" height="5.00"/><rect x="28.00" y="409.10" width="2.00" height="5.00"/><rect x="37.90" y="409.10" width="8.40" height="5.00"/><rect x="47.00" y="409.10" width="8.00" height="5.00"/><rect x="56.00" y="409.10" width="6.60" height="5.00"/></g><g fill="#000" shape-rendering="crispEdges"><rect x="28.50" y="457.50" width="1.50" height="6.50"/><rect x="29.50" y="462.50" width="2.50" height="1.50"/><rect x="38.00" y="457.30" width="25.00" height="0.90"/><rect x="38.00" y="459.00" width="8.20" height="5.30"/><rect x="47.00" y="459.00" width="8.20" height="5.30"/><rect x="56.00" y="459.00" width="7.00" height="5.30"/></g></svg><div class="a" style="left:14px;top:235px;width:121px;text-align:center;font-size:11px;line-height:12px;color:#000">1</div><div class="a" style="left:14px;top:428px;width:121px;text-align:center;font-size:11px;line-height:12px;color:#000">2</div><div class="a" style="left:14px;top:621px;width:121px;text-align:center;font-size:11px;line-height:12px;color:#000">3</div>
<div class="a" style="left:181px;top:64px;width:798px;height:640px;background:#fff"></div>
<div class="a" style="left:978px;top:68px;width:3px;height:636px;background:#A0A0A0"></div>
<div class="a" style="left:182px;top:65px;width:796px;height:639px;background:#fff;border:2px solid #000;border-bottom:none"></div>
<div class="a" style="left:184px;top:67px;width:792px;height:637px;overflow:hidden">
<pre class="doc" style="left:89px;top:55px">Data: 2013-12-16</pre>
<pre class="doc" style="left:89px;top:63px">Firma:</pre>
<pre class="doc" style="left:89px;top:95px">DZIENNIK OBSERWACYJNY Z POMIARÓW RTK</pre>
<pre class="doc" style="left:89px;top:119px">Wykorzystanie systemu ASG-EUPOS: TAK</pre>
<pre class="doc" style="left:89px;top:127px">Nazwa użytkownika dostępowego do systemu ASG-EUPOS:</pre>
<pre class="doc" style="left:89px;top:135px">Zapis surowych obserwacji: NIE</pre>
<pre class="doc" style="left:89px;top:143px">Typ wykorzystanych poprawek: RTK sieciowe</pre>
<pre class="doc" style="left:89px;top:151px">Wykorzystywany strumień poprawek systemu ASG-EUPOS: NTRIP SLASK_VRS_3_1</pre>
<pre class="doc" style="left:89px;top:175px">Nazwa projektu: SWIT-POMIAR</pre>
<pre class="doc" style="left:89px;top:191px">Data: 01-12-2011</pre>
<pre class="doc" style="left:89px;top:207px">Układ współrzędnych:  POLAND/2000/zone 18</pre>
<pre class="doc" style="left:89px;top:223px">Odbiornik GPS</pre>
<pre class="doc" style="left:89px;top:231px"> Typ odbiornika:  ProMark 500</pre>
<pre class="doc" style="left:89px;top:239px"> Typ anteny: MAG990596       NONE</pre>
<pre class="doc" style="left:89px;top:247px"> Przesunięcie L1: 0.102</pre>
<pre class="doc" style="left:89px;top:255px"> Przesunięcie L2: 0.086</pre>
<pre class="doc" style="left:89px;top:272px">Plik geoidy:  \MyDevice\FAST Survey\Data\2001niwG.gaf</pre>
<pre class="doc" style="left:89px;top:280px">Format poprawek: RTCM V3.0</pre>
<pre class="doc" style="left:89px;top:288px">Strumień poprawek: NTRIP ZYWI_RTCM_3_1</pre>
<pre class="doc" style="left:89px;top:304px">Stacja referencyjna</pre>
<pre class="doc" style="left:89px;top:312px">Nr           Czas     X           Y           Z</pre>
<pre class="doc" style="left:89px;top:320px">ZYWI_RTCM_3_1          3904633.32  1360191.89  4840630.79</pre>
<pre class="doc" style="left:89px;top:336px">Wysokość anteny: 2.000</pre>
<pre class="doc" style="left:89px;top:352px">Pomiary sytuacyjno-wysokościowe</pre>
<pre class="doc" style="left:89px;top:360px">Nr           Czas     Tryb   dX        dY        dZ        x           y           h        E   Sat PDOP   Rms2D  Rms1D  Kod</pre>
<pre class="doc" style="left:89px;top:368px">PS1          13:22:44 Fix    -5016.25  -19968.81 9491.06   5520755.30  6569573.26  333.446  1   14  1.400  0.021  0.030</pre>
<pre class="doc" style="left:89px;top:376px">1            13:26:13 Fix    -5157.01  -19954.75 9597.65   5520923.02  6569630.14  331.950  1   14  1.700  0.022  0.035</pre>
<pre class="doc" style="left:89px;top:384px">2            13:26:33 Fix    -5161.60  -19955.90 9599.92   5520928.10  6569630.48  330.647  1   14  1.700  0.023  0.036</pre>
<pre class="doc" style="left:89px;top:392px">3            13:27:16 Fix    -5160.46  -19937.62 9594.95   5520919.75  6569647.50  331.370  1   14  1.500  0.021  0.037</pre>
<pre class="doc" style="left:89px;top:400px">4            13:27:51 Fix    -5159.32  -19923.26 9591.22   5520913.13  6569660.80  332.230  1   14  1.500  0.023  0.031</pre>
<pre class="doc" style="left:89px;top:408px">5            13:28:10 Fix    -5155.66  -19923.27 9588.47   5520908.69  6569659.66  332.358  1   14  1.500  0.023  0.033</pre>
<pre class="doc" style="left:89px;top:416px">6            13:29:14 Fix    -5159.98  -19923.06 9591.98   5520914.04  6569661.19  332.450  1   14  1.500  0.022  0.032</pre>
<pre class="doc" style="left:89px;top:424px">7            13:29:35 Fix    -5164.40  -19922.10 9594.94   5520918.94  6569663.47  332.217  1   14  1.700  0.021  0.031</pre>
<pre class="doc" style="left:89px;top:432px">8            13:30:08 Fix    -5167.75  -19922.20 9598.07   5520923.42  6569664.41  332.538  1   14  1.700  0.022  0.029</pre>
<pre class="doc" style="left:89px;top:440px">9            13:30:37 Fix    -5179.79  -19924.55 9607.47   5520938.78  6569665.90  331.891  1   14  1.700  0.026  0.040</pre>
<pre class="doc" style="left:89px;top:448px">10           13:31:32 Fix    -5182.75  -19916.31 9608.65   5520939.75  6569674.64  332.709  1   14  1.500  0.023  0.033</pre>
<pre class="doc" style="left:89px;top:456px">11           13:31:44 Fix    -5181.94  -19916.85 9608.07   5520938.91  6569673.88  332.646  1   14  1.500  0.021  0.032</pre>
<pre class="doc" style="left:89px;top:464px">12           13:32:09 Fix    -5180.78  -19916.47 9607.58   5520937.66  6569673.88  333.066  1   14  1.500  0.021  0.033</pre>
<pre class="doc" style="left:89px;top:472px">13           13:34:13 Fix    -5187.14  -19898.56 9607.25   5520937.84  6569692.88  332.685  1   14  1.600  0.025  0.036</pre>
<pre class="doc" style="left:89px;top:480px">14           13:35:41 Fix    -5205.85  -19840.56 9605.73   5520936.77  6569753.83  332.277  1   14  1.500  0.021  0.035</pre>
<pre class="doc" style="left:89px;top:496px">Data: 06-12-2011</pre>
<pre class="doc" style="left:89px;top:512px">Strumień poprawek: NTRIP SLASK_VRS_3_1</pre>
<pre class="doc" style="left:89px;top:528px">Stacja referencyjna</pre>
<pre class="doc" style="left:89px;top:536px">Nr           Czas     X           Y           Z</pre>
<pre class="doc" style="left:89px;top:544px">BP0000001             3899597.40  1340222.45  4850128.32</pre>
<pre class="doc" style="left:89px;top:560px">Pomiary sytuacyjno-wysokościowe</pre>
<pre class="doc" style="left:89px;top:568px">Nr           Czas     Tryb   dX        dY        dZ        x           y           h        E   Sat PDOP   Rms2D  Rms1D  Kod</pre>
<pre class="doc" style="left:89px;top:576px">PS2          12:02:20 Fix    19.70     0.66      -6.46     5520755.28  6569573.28  333.477  1   14  1.300  0.016  0.019</pre>
<pre class="doc" style="left:89px;top:584px">15           12:11:32 Fix    -130.43   11.60     107.77    5520935.47  6569630.10  331.442  1   14  1.400  0.016  0.020</pre>
<pre class="doc" style="left:89px;top:592px">16           12:11:51 Fix    -127.94   12.60     105.49    5520931.96  6569630.27  331.431  1   14  1.300  0.015  0.020</pre>
<pre class="doc" style="left:89px;top:600px">17           12:12:04 Fix    -125.03   12.88     103.03    5520928.19  6569629.64  331.392  1   14  1.500  0.016  0.020</pre>
<pre class="doc" style="left:89px;top:608px">18           12:12:18 Fix    -125.10   13.50     102.97    5520928.06  6569630.26  331.431  1   14  1.300  0.012  0.017</pre>
<pre class="doc" style="left:89px;top:616px">19           12:12:43 Fix    -119.61   12.58     98.75     5520921.57  6569627.69  331.362  1   14  1.300  0.013  0.018</pre>
<pre class="doc" style="left:89px;top:624px">20           12:13:08 Fix    -107.48   11.46     89.58     5520907.10  6569622.87  331.523  1   14  1.400  0.013  0.017</pre>
<pre class="doc" style="left:89px;top:632px">21           12:13:28 Fix    -99.88    12.70     83.93     5520897.64  6569621.69  332.097  1   14  1.400  0.017  0.021</pre>
</div>
<div class="a" style="left:273px;top:173px;width:180px;height:1px;background:repeating-linear-gradient(90deg,#000 0 4px,#9AB 4px 5px)"></div>
<div class="a" style="left:1003px;top:55px;width:1px;height:649px;background:#FFFFFF"></div>
<div class="a" style="left:1004px;top:72px;width:15px;height:348px;background:#CDCDCD"></div>
<svg class="a" style="left:1007px;top:60px" width="9" height="8" viewBox="0 0 9 8"><path d="M1.3 6.5 L4.5 3 L7.7 6.5" fill="none" stroke="#555555" stroke-width="2"/></svg>
<svg class="a" style="left:1007px;top:692px" width="9" height="8" viewBox="0 0 9 8"><path d="M1.3 1.5 L4.5 5 L7.7 1.5" fill="none" stroke="#555555" stroke-width="2"/></svg>
<div class="a" style="left:53px;top:708px;font-size:11px;line-height:13px;color:#000">Strona 1 z 3</div>
<div class="sep" style="left:157px"></div>
<div class="sep" style="left:237px"></div>
<div class="sep" style="left:437px"></div>
<div class="sep" style="left:557px"></div>
<div class="sep" style="left:677px"></div>
<div class="sep" style="left:727px"></div>
<div class="a" style="left:1016px;top:713px;width:2px;height:2px;background:#B8B8B8"></div>
<div class="a" style="left:1013px;top:716px;width:2px;height:2px;background:#B8B8B8"></div>
<div class="a" style="left:1016px;top:716px;width:2px;height:2px;background:#B8B8B8"></div>
<div class="a" style="left:1010px;top:719px;width:2px;height:2px;background:#B8B8B8"></div>
<div class="a" style="left:1013px;top:719px;width:2px;height:2px;background:#B8B8B8"></div>
<div class="a" style="left:1016px;top:719px;width:2px;height:2px;background:#B8B8B8"></div>
</body></html>
